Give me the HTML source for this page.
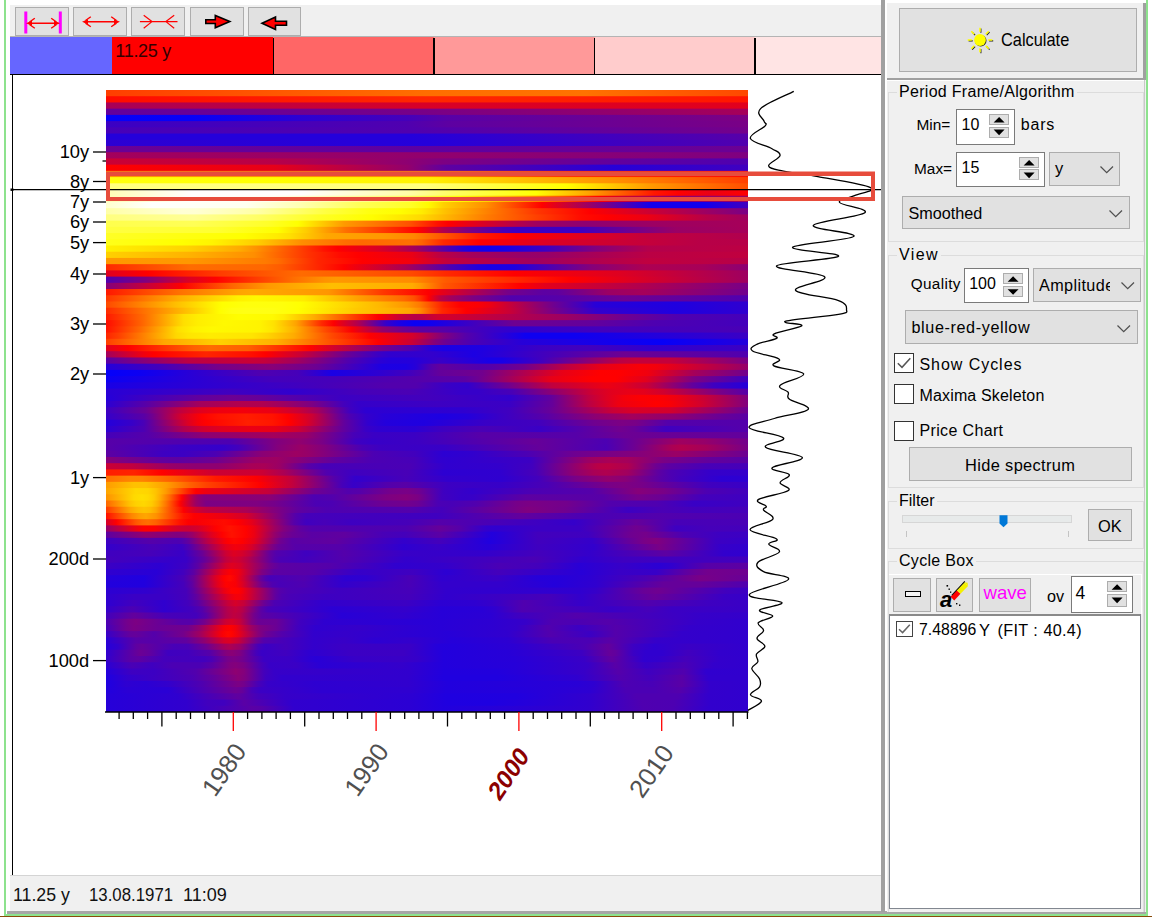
<!DOCTYPE html>
<html><head><meta charset="utf-8"><title>Spectrum</title>
<style>
html,body{margin:0;padding:0}
body{width:1152px;height:917px;position:relative;overflow:hidden;background:#fff;font-family:"Liberation Sans",sans-serif;font-size:16px;color:#000}
.a{position:absolute}
.btn{position:absolute;background:#e1e1e1;border:1px solid #adadad;box-sizing:border-box}
.inp{position:absolute;background:#fff;border:1px solid #7a7a7a;box-sizing:border-box}
.sp{position:absolute;background:#e1e1e1;border:1px solid #adadad;box-sizing:border-box}
.grp{position:absolute;border:1px solid #dcdcdc;box-sizing:border-box}
.t{position:absolute;white-space:nowrap;line-height:20px;height:20px}
.cb{position:absolute;width:20px;height:20px;background:#fff;border:1.5px solid #333;box-sizing:border-box}
</style></head><body>
<!-- window frame -->
<div class="a" style="left:4px;top:0;width:2.4px;height:915px;background:#8de28d"></div>
<div class="a" style="left:7px;top:911px;width:1139px;height:3px;background:#a6a6a6"></div>
<div class="a" style="left:4px;top:914px;width:1144px;height:1.8px;background:#8de28d"></div>
<div class="a" style="left:0;top:915.7px;width:1152px;height:2px;background:#8a4a0a"></div>
<div class="a" style="left:1145.6px;top:0;width:2.4px;height:915px;background:#8de28d"></div>

<!-- toolbar -->
<div class="a" style="left:10px;top:4.5px;width:871px;height:32px;background:#f0f0f0"></div>
<div class="btn" style="left:14.5px;top:6.5px;width:54px;height:29px">
<svg class="a" style="left:-1px;top:-1px" width="54" height="29" viewBox="14.5 6.5 54 29"><rect x="23.8" y="11" width="3" height="22" fill="#f0f"/><rect x="58.3" y="11" width="3" height="22" fill="#f0f"/><path d="M28 22.7H58M34.3 17.7L29 21.5M34.3 27.7L29 24M50.7 17.7L56 21.5M50.7 27.7L56 24" stroke="#f00" stroke-width="1.4" fill="none"/><path d="M25.5 22.7L31.5 20.2V25.2ZM59.5 22.7L53.5 20.2V25.2Z" fill="#f00"/></svg></div>
<div class="btn" style="left:73px;top:6.5px;width:54px;height:29px">
<svg class="a" style="left:-1px;top:-1px" width="54" height="29" viewBox="73 6.5 54 29"><path d="M84 21.3H118M90.8 16.3L85.5 20M90.8 26.3L85.5 22.6M111.2 16.3L116.5 20M111.2 26.3L116.5 22.6" stroke="#f00" stroke-width="1.4" fill="none"/><path d="M82 21.3L88 18.8V23.8ZM120 21.3L114 18.8V23.8Z" fill="#f00"/></svg></div>
<div class="btn" style="left:131.3px;top:6.5px;width:54px;height:29px">
<svg class="a" style="left:-1px;top:-1px" width="54" height="29" viewBox="131.3 6.5 54 29"><path d="M140.2 21.1H177.8M144 14.8L152.3 21.1L144 27.7M174.5 14.8L166.2 21.1L174.5 27.7" stroke="#f00" stroke-width="1.2" fill="none"/></svg></div>
<div class="btn" style="left:189.7px;top:6.5px;width:54px;height:29px">
<svg class="a" style="left:-1px;top:-1px" width="54" height="29" viewBox="189.7 6.5 54 29"><path d="M205.5 19.2H215V15L229.5 21.1L215 27.3V23H205.5Z" fill="#f00" stroke="#000" stroke-width="1.6" stroke-linejoin="miter"/></svg></div>
<div class="btn" style="left:248px;top:6.5px;width:52.5px;height:29px">
<svg class="a" style="left:-1px;top:-1px" width="54" height="29" viewBox="248 6.5 54 29"><path d="M286.5 20.8H275.5V16.5L262 22.7L275.5 29V24.7H286.5Z" fill="#f00" stroke="#000" stroke-width="1.6" stroke-linejoin="miter"/></svg></div>

<!-- colour bar -->
<div class="a" style="left:10px;top:36.3px;width:872px;height:1px;background:#b4b4b4"></div>
<div class="a" style="left:10px;top:37px;width:102px;height:37.3px;background:#6666ff"></div>
<div class="a" style="left:112px;top:37px;width:161px;height:37.3px;background:#ff0000"></div>
<div class="a" style="left:273px;top:37px;width:161px;height:37.3px;background:#ff6666"></div>
<div class="a" style="left:434px;top:37px;width:160.5px;height:37.3px;background:#ff9999"></div>
<div class="a" style="left:594.5px;top:37px;width:160.5px;height:37.3px;background:#ffcccc"></div>
<div class="a" style="left:755px;top:37px;width:127px;height:37.3px;background:#ffe4e4"></div>
<div class="a" style="left:272.6px;top:38px;width:1.2px;height:37px;background:#000"></div>
<div class="a" style="left:433.4px;top:38px;width:1.2px;height:37px;background:#000"></div>
<div class="a" style="left:593.9px;top:38px;width:1.2px;height:37px;background:#000"></div>
<div class="a" style="left:754.4px;top:38px;width:1.2px;height:37px;background:#000"></div>
<div class="a" style="left:10px;top:73.9px;width:872px;height:1.4px;background:#000"></div>
<div class="t" style="left:115.3px;top:40.5px;font-size:18px;letter-spacing:-0.3px;color:#300">11.25 y</div>
<!-- chart left border -->
<div class="a" style="left:11.5px;top:75px;width:1.1px;height:800px;background:#000"></div>

<svg width="1152" height="917" viewBox="0 0 1152 917" style="position:absolute;left:0;top:0" font-family="Liberation Sans, sans-serif">
<g transform="translate(106,90)"><defs><linearGradient id="r0"><stop offset="0" stop-color="#ff3e00"/><stop offset="0.495" stop-color="#ff6d00"/><stop offset="0.745" stop-color="#ff7200"/><stop offset="1" stop-color="#ff4800"/></linearGradient><linearGradient id="r1"><stop offset="0" stop-color="#ff0b00"/><stop offset="0.498" stop-color="#ff2600"/><stop offset="1" stop-color="#ff1500"/></linearGradient><linearGradient id="r2"><stop offset="0" stop-color="#a70058"/><stop offset="0.498" stop-color="#d80027"/><stop offset="1" stop-color="#e2001d"/></linearGradient><linearGradient id="r3"><stop offset="0" stop-color="#63009c"/><stop offset="0.474" stop-color="#760089"/><stop offset="1" stop-color="#a60059"/></linearGradient><linearGradient id="r4"><stop offset="0" stop-color="#0600f9"/><stop offset="0.134" stop-color="#0700f8"/><stop offset="0.302" stop-color="#2c00d3"/><stop offset="0.47" stop-color="#4500ba"/><stop offset="0.53" stop-color="#5800a7"/><stop offset="1" stop-color="#7c0083"/></linearGradient><linearGradient id="r5"><stop offset="0" stop-color="#3b00c4"/><stop offset="0.467" stop-color="#4f00b0"/><stop offset="0.533" stop-color="#5d00a2"/><stop offset="1" stop-color="#790086"/></linearGradient><linearGradient id="r6"><stop offset="0" stop-color="#4600b9"/><stop offset="0.474" stop-color="#5000af"/><stop offset="1" stop-color="#74008b"/></linearGradient><linearGradient id="r7"><stop offset="0" stop-color="#2400db"/><stop offset="0.477" stop-color="#2400db"/><stop offset="1" stop-color="#5600a9"/></linearGradient><linearGradient id="r8"><stop offset="0" stop-color="#2c00d3"/><stop offset="0.502" stop-color="#2400db"/><stop offset="1" stop-color="#5000af"/></linearGradient><linearGradient id="r9"><stop offset="0" stop-color="#6b0094"/><stop offset="0.474" stop-color="#5c00a3"/><stop offset="1" stop-color="#6b0094"/></linearGradient><linearGradient id="r10"><stop offset="0" stop-color="#a4005b"/><stop offset="1" stop-color="#7f0080"/></linearGradient><linearGradient id="r11"><stop offset="0" stop-color="#ca0035"/><stop offset="0.259" stop-color="#b70048"/><stop offset="0.467" stop-color="#8e0071"/><stop offset="0.526" stop-color="#7c0083"/><stop offset="1" stop-color="#4e00b1"/></linearGradient><linearGradient id="r12"><stop offset="0" stop-color="#ff0000"/><stop offset="0.262" stop-color="#e60019"/><stop offset="0.47" stop-color="#93006c"/><stop offset="0.53" stop-color="#5e00a1"/><stop offset="0.791" stop-color="#2700d8"/><stop offset="1" stop-color="#4000bf"/></linearGradient><linearGradient id="r13"><stop offset="0" stop-color="#ff9900"/><stop offset="0.495" stop-color="#ff8c00"/><stop offset="0.72" stop-color="#ff3400"/><stop offset="1" stop-color="#ff0e00"/></linearGradient><linearGradient id="r14"><stop offset="0" stop-color="#ffff0d"/><stop offset="0.249" stop-color="#ffff00"/><stop offset="0.502" stop-color="#fff100"/><stop offset="0.801" stop-color="#ff8d00"/><stop offset="1" stop-color="#ff3f00"/></linearGradient><linearGradient id="r15"><stop offset="0" stop-color="#ffff80"/><stop offset="0.495" stop-color="#ffff7f"/><stop offset="0.717" stop-color="#ffff00"/><stop offset="0.847" stop-color="#ff9a00"/><stop offset="1" stop-color="#ff4e00"/></linearGradient><linearGradient id="r16"><stop offset="0" stop-color="#ffffb5"/><stop offset="0.134" stop-color="#fffffe"/><stop offset="0.305" stop-color="#fffffd"/><stop offset="0.474" stop-color="#ffffa6"/><stop offset="0.53" stop-color="#ffff6a"/><stop offset="0.67" stop-color="#ffff02"/><stop offset="0.754" stop-color="#ffa000"/><stop offset="0.854" stop-color="#ff1700"/><stop offset="0.891" stop-color="#ff0100"/><stop offset="0.938" stop-color="#eb0014"/><stop offset="1" stop-color="#fe0001"/></linearGradient><linearGradient id="r17"><stop offset="0" stop-color="#ffffb5"/><stop offset="0.131" stop-color="#fffffd"/><stop offset="0.259" stop-color="#fffff1"/><stop offset="0.47" stop-color="#ffff60"/><stop offset="0.551" stop-color="#ffff01"/><stop offset="0.648" stop-color="#ff9e00"/><stop offset="0.717" stop-color="#ff4c00"/><stop offset="0.769" stop-color="#ff0000"/><stop offset="0.81" stop-color="#ca0035"/><stop offset="0.888" stop-color="#8d0072"/><stop offset="1" stop-color="#9f0060"/></linearGradient><linearGradient id="r18"><stop offset="0" stop-color="#ffffcf"/><stop offset="0.0717" stop-color="#fffffd"/><stop offset="0.218" stop-color="#ffffef"/><stop offset="0.302" stop-color="#ffffb3"/><stop offset="0.393" stop-color="#ffff59"/><stop offset="0.474" stop-color="#ffff27"/><stop offset="0.502" stop-color="#fffb00"/><stop offset="0.526" stop-color="#ffd000"/><stop offset="0.592" stop-color="#ff8f00"/><stop offset="0.679" stop-color="#ff0100"/><stop offset="0.85" stop-color="#1300ec"/><stop offset="0.931" stop-color="#1100ee"/><stop offset="1" stop-color="#4000bf"/></linearGradient><linearGradient id="r19"><stop offset="0" stop-color="#ffffa7"/><stop offset="0.118" stop-color="#ffffd4"/><stop offset="0.14" stop-color="#ffffd3"/><stop offset="0.234" stop-color="#ffffa7"/><stop offset="0.343" stop-color="#ffff40"/><stop offset="0.411" stop-color="#ffff0f"/><stop offset="0.458" stop-color="#fffe00"/><stop offset="0.492" stop-color="#ffec00"/><stop offset="0.53" stop-color="#ffbf00"/><stop offset="0.673" stop-color="#ff3500"/><stop offset="0.754" stop-color="#ff0000"/><stop offset="1" stop-color="#790086"/></linearGradient><linearGradient id="r20"><stop offset="0" stop-color="#ffff80"/><stop offset="0.137" stop-color="#ffff95"/><stop offset="0.237" stop-color="#ffff66"/><stop offset="0.33" stop-color="#ffff25"/><stop offset="0.414" stop-color="#fffe00"/><stop offset="0.489" stop-color="#ffda00"/><stop offset="0.592" stop-color="#ff7c00"/><stop offset="0.741" stop-color="#ff0b00"/><stop offset="0.779" stop-color="#ff0000"/><stop offset="0.841" stop-color="#ed0012"/><stop offset="0.935" stop-color="#b70048"/><stop offset="1" stop-color="#9f0060"/></linearGradient><linearGradient id="r21"><stop offset="0" stop-color="#ffff4d"/><stop offset="0.137" stop-color="#ffff56"/><stop offset="0.252" stop-color="#ffff29"/><stop offset="0.299" stop-color="#ffff00"/><stop offset="0.371" stop-color="#ff9a00"/><stop offset="0.474" stop-color="#ff5000"/><stop offset="0.517" stop-color="#ff1000"/><stop offset="0.533" stop-color="#ff0000"/><stop offset="0.67" stop-color="#a1005e"/><stop offset="0.748" stop-color="#8d0072"/><stop offset="0.854" stop-color="#9d0062"/><stop offset="1" stop-color="#a60059"/></linearGradient><linearGradient id="r22"><stop offset="0" stop-color="#ffff3f"/><stop offset="0.171" stop-color="#ffff32"/><stop offset="0.268" stop-color="#fffe00"/><stop offset="0.312" stop-color="#ffcc00"/><stop offset="0.374" stop-color="#ff6f00"/><stop offset="0.486" stop-color="#ff0200"/><stop offset="0.498" stop-color="#ed0012"/><stop offset="0.526" stop-color="#b0004f"/><stop offset="0.561" stop-color="#7f0080"/><stop offset="0.62" stop-color="#4600b9"/><stop offset="0.642" stop-color="#3b00c4"/><stop offset="0.735" stop-color="#3c00c3"/><stop offset="0.888" stop-color="#9a0065"/><stop offset="1" stop-color="#a60059"/></linearGradient><linearGradient id="r23"><stop offset="0" stop-color="#ffff26"/><stop offset="0.215" stop-color="#ffff00"/><stop offset="0.265" stop-color="#ffec00"/><stop offset="0.287" stop-color="#ffdf00"/><stop offset="0.343" stop-color="#ffa700"/><stop offset="0.433" stop-color="#ff9800"/><stop offset="0.48" stop-color="#ff8600"/><stop offset="0.583" stop-color="#ff1a00"/><stop offset="0.639" stop-color="#ff0000"/><stop offset="0.844" stop-color="#c2003d"/><stop offset="1" stop-color="#b0004f"/></linearGradient><linearGradient id="r24"><stop offset="0" stop-color="#ffff19"/><stop offset="0.115" stop-color="#ffff00"/><stop offset="0.165" stop-color="#fff400"/><stop offset="0.237" stop-color="#ffcc00"/><stop offset="0.305" stop-color="#ff8d00"/><stop offset="0.374" stop-color="#ff6d00"/><stop offset="0.399" stop-color="#ff6800"/><stop offset="0.477" stop-color="#ff7100"/><stop offset="0.492" stop-color="#ff6300"/><stop offset="0.526" stop-color="#ff2900"/><stop offset="0.583" stop-color="#ff0000"/><stop offset="0.685" stop-color="#dc0023"/><stop offset="0.925" stop-color="#b80047"/><stop offset="1" stop-color="#b70048"/></linearGradient><linearGradient id="r25"><stop offset="0" stop-color="#fff100"/><stop offset="0.128" stop-color="#ffd300"/><stop offset="0.209" stop-color="#ffaa00"/><stop offset="0.234" stop-color="#ff9200"/><stop offset="0.34" stop-color="#ff1200"/><stop offset="0.361" stop-color="#ff0000"/><stop offset="0.43" stop-color="#d5002a"/><stop offset="0.464" stop-color="#b60049"/><stop offset="0.486" stop-color="#9b0064"/><stop offset="0.558" stop-color="#2500da"/><stop offset="0.573" stop-color="#1800e7"/><stop offset="0.598" stop-color="#1200ed"/><stop offset="0.62" stop-color="#1700e8"/><stop offset="0.685" stop-color="#3e00c1"/><stop offset="0.763" stop-color="#82007d"/><stop offset="0.844" stop-color="#b4004b"/><stop offset="1" stop-color="#bc0043"/></linearGradient><linearGradient id="r26"><stop offset="0" stop-color="#ffd000"/><stop offset="0.128" stop-color="#ffb300"/><stop offset="0.231" stop-color="#ff8e00"/><stop offset="0.315" stop-color="#ff3200"/><stop offset="0.364" stop-color="#ff0b00"/><stop offset="0.393" stop-color="#ff0000"/><stop offset="0.477" stop-color="#ea0015"/><stop offset="0.523" stop-color="#b90046"/><stop offset="0.567" stop-color="#a5005a"/><stop offset="0.654" stop-color="#960069"/><stop offset="0.688" stop-color="#970068"/><stop offset="0.847" stop-color="#bb0044"/><stop offset="1" stop-color="#c0003f"/></linearGradient><linearGradient id="r27"><stop offset="0" stop-color="#ff9900"/><stop offset="0.131" stop-color="#ff9800"/><stop offset="0.249" stop-color="#ff7a00"/><stop offset="0.268" stop-color="#ff6d00"/><stop offset="0.33" stop-color="#ff2500"/><stop offset="0.399" stop-color="#ff0000"/><stop offset="0.474" stop-color="#f3000c"/><stop offset="0.53" stop-color="#c2003d"/><stop offset="0.667" stop-color="#9f0060"/><stop offset="0.847" stop-color="#c0003f"/><stop offset="1" stop-color="#b70048"/></linearGradient><linearGradient id="r28"><stop offset="0" stop-color="#ff2900"/><stop offset="0.131" stop-color="#ff6c00"/><stop offset="0.246" stop-color="#ff6700"/><stop offset="0.271" stop-color="#ff5c00"/><stop offset="0.371" stop-color="#ff0100"/><stop offset="0.467" stop-color="#a80057"/><stop offset="0.536" stop-color="#4c00b3"/><stop offset="0.579" stop-color="#2100de"/><stop offset="0.598" stop-color="#1900e6"/><stop offset="0.636" stop-color="#1e00e1"/><stop offset="0.757" stop-color="#860079"/><stop offset="0.841" stop-color="#ad0052"/><stop offset="0.928" stop-color="#a70058"/><stop offset="1" stop-color="#8c0073"/></linearGradient><linearGradient id="r29"><stop offset="0" stop-color="#df0020"/><stop offset="0.0654" stop-color="#ff0000"/><stop offset="0.178" stop-color="#ff3c00"/><stop offset="0.305" stop-color="#ff6b00"/><stop offset="0.477" stop-color="#ff4800"/><stop offset="0.53" stop-color="#ff2800"/><stop offset="0.636" stop-color="#ff0000"/><stop offset="0.801" stop-color="#de0021"/><stop offset="1" stop-color="#9e0061"/></linearGradient><linearGradient id="r30"><stop offset="0" stop-color="#5100ae"/><stop offset="0.0623" stop-color="#80007f"/><stop offset="0.131" stop-color="#dc0023"/><stop offset="0.171" stop-color="#ff0100"/><stop offset="0.293" stop-color="#ff6e00"/><stop offset="0.34" stop-color="#ff9200"/><stop offset="0.358" stop-color="#ff9800"/><stop offset="0.477" stop-color="#ff8c00"/><stop offset="0.53" stop-color="#ff5a00"/><stop offset="0.723" stop-color="#ff0000"/><stop offset="1" stop-color="#9f0060"/></linearGradient><linearGradient id="r31"><stop offset="0" stop-color="#85007a"/><stop offset="0.118" stop-color="#fe0001"/><stop offset="0.196" stop-color="#ff6500"/><stop offset="0.252" stop-color="#ff9900"/><stop offset="0.352" stop-color="#ffbe00"/><stop offset="0.477" stop-color="#ffab00"/><stop offset="0.489" stop-color="#ff9c00"/><stop offset="0.526" stop-color="#ff5700"/><stop offset="0.645" stop-color="#fe0001"/><stop offset="0.685" stop-color="#e3001c"/><stop offset="1" stop-color="#780087"/></linearGradient><linearGradient id="r32"><stop offset="0" stop-color="#ff1800"/><stop offset="0.115" stop-color="#ff7100"/><stop offset="0.206" stop-color="#ffa400"/><stop offset="0.227" stop-color="#ffa900"/><stop offset="0.346" stop-color="#ff9600"/><stop offset="0.433" stop-color="#ff3600"/><stop offset="0.502" stop-color="#fe0001"/><stop offset="0.626" stop-color="#760089"/><stop offset="0.682" stop-color="#5c00a3"/><stop offset="0.704" stop-color="#5f00a0"/><stop offset="0.782" stop-color="#9b0064"/><stop offset="0.838" stop-color="#a5005a"/><stop offset="1" stop-color="#71008e"/></linearGradient><linearGradient id="r33"><stop offset="0" stop-color="#ff3700"/><stop offset="0.115" stop-color="#ffaf00"/><stop offset="0.206" stop-color="#fff100"/><stop offset="0.234" stop-color="#fff800"/><stop offset="0.308" stop-color="#ffec00"/><stop offset="0.393" stop-color="#ffa000"/><stop offset="0.464" stop-color="#ff6800"/><stop offset="0.48" stop-color="#ff5100"/><stop offset="0.489" stop-color="#ff3500"/><stop offset="0.502" stop-color="#ff0300"/><stop offset="0.505" stop-color="#f5000a"/><stop offset="0.52" stop-color="#be0041"/><stop offset="0.536" stop-color="#a2005d"/><stop offset="0.573" stop-color="#7b0084"/><stop offset="0.632" stop-color="#5100ae"/><stop offset="0.713" stop-color="#5600a9"/><stop offset="0.807" stop-color="#6e0091"/><stop offset="1" stop-color="#4f00b0"/></linearGradient><linearGradient id="r34"><stop offset="0" stop-color="#ff4900"/><stop offset="0.109" stop-color="#ffbf00"/><stop offset="0.181" stop-color="#ffff00"/><stop offset="0.218" stop-color="#ffff0d"/><stop offset="0.274" stop-color="#ffff0c"/><stop offset="0.302" stop-color="#ffff01"/><stop offset="0.427" stop-color="#ffb700"/><stop offset="0.47" stop-color="#ff9500"/><stop offset="0.489" stop-color="#ff7900"/><stop offset="0.526" stop-color="#ff1d00"/><stop offset="0.551" stop-color="#ff0100"/><stop offset="0.579" stop-color="#fb0004"/><stop offset="0.598" stop-color="#ed0012"/><stop offset="0.698" stop-color="#6e0091"/><stop offset="0.763" stop-color="#2700d8"/><stop offset="0.888" stop-color="#1f00e0"/><stop offset="1" stop-color="#2f00d0"/></linearGradient><linearGradient id="r35"><stop offset="0" stop-color="#ff2b00"/><stop offset="0.178" stop-color="#fffe00"/><stop offset="0.196" stop-color="#ffff10"/><stop offset="0.218" stop-color="#ffff14"/><stop offset="0.259" stop-color="#ffff13"/><stop offset="0.299" stop-color="#ffff01"/><stop offset="0.389" stop-color="#ffc900"/><stop offset="0.474" stop-color="#ffa700"/><stop offset="0.489" stop-color="#ff8c00"/><stop offset="0.523" stop-color="#ff2900"/><stop offset="0.561" stop-color="#ff0000"/><stop offset="0.629" stop-color="#c90036"/><stop offset="0.698" stop-color="#75008a"/><stop offset="0.763" stop-color="#3200cd"/><stop offset="0.888" stop-color="#1f00e0"/><stop offset="1" stop-color="#2f00d0"/></linearGradient><linearGradient id="r36"><stop offset="0" stop-color="#ff1a00"/><stop offset="0.0592" stop-color="#ff6b00"/><stop offset="0.121" stop-color="#ffdf00"/><stop offset="0.143" stop-color="#ffed00"/><stop offset="0.206" stop-color="#fffe00"/><stop offset="0.259" stop-color="#fffa00"/><stop offset="0.277" stop-color="#ffed00"/><stop offset="0.324" stop-color="#ffac00"/><stop offset="0.393" stop-color="#ff3100"/><stop offset="0.424" stop-color="#fd0002"/><stop offset="0.458" stop-color="#c90036"/><stop offset="0.48" stop-color="#b70048"/><stop offset="0.492" stop-color="#b90046"/><stop offset="0.517" stop-color="#d0002f"/><stop offset="0.533" stop-color="#d1002e"/><stop offset="0.717" stop-color="#9c0063"/><stop offset="0.807" stop-color="#6f0090"/><stop offset="0.888" stop-color="#5000af"/><stop offset="1" stop-color="#4400bb"/></linearGradient><linearGradient id="r37"><stop offset="0" stop-color="#ff0c00"/><stop offset="0.0561" stop-color="#ff6400"/><stop offset="0.121" stop-color="#ffdf00"/><stop offset="0.143" stop-color="#ffee00"/><stop offset="0.184" stop-color="#fff900"/><stop offset="0.24" stop-color="#fff300"/><stop offset="0.262" stop-color="#ffe100"/><stop offset="0.296" stop-color="#ffa300"/><stop offset="0.336" stop-color="#ff2900"/><stop offset="0.355" stop-color="#fd0002"/><stop offset="0.393" stop-color="#ae0051"/><stop offset="0.436" stop-color="#3500ca"/><stop offset="0.455" stop-color="#1c00e3"/><stop offset="0.48" stop-color="#0a00f5"/><stop offset="0.508" stop-color="#1100ee"/><stop offset="0.636" stop-color="#6e0091"/><stop offset="0.757" stop-color="#63009c"/><stop offset="0.854" stop-color="#4e00b1"/><stop offset="1" stop-color="#4300bc"/></linearGradient><linearGradient id="r38"><stop offset="0" stop-color="#ff1100"/><stop offset="0.053" stop-color="#ff6a00"/><stop offset="0.112" stop-color="#ffdf00"/><stop offset="0.137" stop-color="#fff200"/><stop offset="0.165" stop-color="#fff900"/><stop offset="0.24" stop-color="#fff300"/><stop offset="0.259" stop-color="#ffe600"/><stop offset="0.293" stop-color="#ffb300"/><stop offset="0.34" stop-color="#ff4d00"/><stop offset="0.383" stop-color="#fb0004"/><stop offset="0.43" stop-color="#94006b"/><stop offset="0.464" stop-color="#6e0091"/><stop offset="0.489" stop-color="#5c00a3"/><stop offset="0.523" stop-color="#5700a8"/><stop offset="0.614" stop-color="#3500ca"/><stop offset="0.642" stop-color="#3100ce"/><stop offset="0.773" stop-color="#4400bb"/><stop offset="1" stop-color="#4900b6"/></linearGradient><linearGradient id="r39"><stop offset="0" stop-color="#ff2500"/><stop offset="0.0187" stop-color="#ff3e00"/><stop offset="0.109" stop-color="#ffd700"/><stop offset="0.128" stop-color="#ffe500"/><stop offset="0.162" stop-color="#ffec00"/><stop offset="0.227" stop-color="#ffe500"/><stop offset="0.252" stop-color="#ffd400"/><stop offset="0.293" stop-color="#ffab00"/><stop offset="0.352" stop-color="#ff4800"/><stop offset="0.411" stop-color="#fe0001"/><stop offset="0.477" stop-color="#d4002b"/><stop offset="0.492" stop-color="#bf0040"/><stop offset="0.526" stop-color="#80007f"/><stop offset="0.561" stop-color="#5500aa"/><stop offset="0.654" stop-color="#0e00f1"/><stop offset="0.729" stop-color="#0e00f1"/><stop offset="1" stop-color="#3a00c5"/></linearGradient><linearGradient id="r40"><stop offset="0" stop-color="#ff3f00"/><stop offset="0.0903" stop-color="#ffa600"/><stop offset="0.178" stop-color="#ffd100"/><stop offset="0.265" stop-color="#ffb100"/><stop offset="0.424" stop-color="#ff0000"/><stop offset="0.477" stop-color="#c90036"/><stop offset="0.514" stop-color="#81007e"/><stop offset="0.53" stop-color="#6b0094"/><stop offset="0.57" stop-color="#4c00b3"/><stop offset="0.648" stop-color="#2700d8"/><stop offset="0.866" stop-color="#0700f8"/><stop offset="1" stop-color="#2300dc"/></linearGradient><linearGradient id="r41"><stop offset="0" stop-color="#e1001e"/><stop offset="0.0343" stop-color="#ff0000"/><stop offset="0.137" stop-color="#ff6000"/><stop offset="0.162" stop-color="#ff6c00"/><stop offset="0.221" stop-color="#ff6000"/><stop offset="0.318" stop-color="#ff0300"/><stop offset="0.43" stop-color="#760089"/><stop offset="0.474" stop-color="#5000af"/><stop offset="0.508" stop-color="#2400db"/><stop offset="0.526" stop-color="#1b00e4"/><stop offset="0.586" stop-color="#1f00e0"/><stop offset="0.673" stop-color="#3a00c5"/><stop offset="0.748" stop-color="#4200bd"/><stop offset="0.85" stop-color="#3000cf"/><stop offset="1" stop-color="#3b00c4"/></linearGradient><linearGradient id="r42"><stop offset="0" stop-color="#a2005d"/><stop offset="0.0592" stop-color="#f1000e"/><stop offset="0.0748" stop-color="#ff0000"/><stop offset="0.156" stop-color="#ff2400"/><stop offset="0.227" stop-color="#ff0e00"/><stop offset="0.249" stop-color="#ff0000"/><stop offset="0.305" stop-color="#c70038"/><stop offset="0.374" stop-color="#6c0093"/><stop offset="0.424" stop-color="#3b00c4"/><stop offset="0.442" stop-color="#3000cf"/><stop offset="0.508" stop-color="#3300cc"/><stop offset="0.573" stop-color="#1c00e3"/><stop offset="0.807" stop-color="#6e0091"/><stop offset="1" stop-color="#4f00b0"/></linearGradient><linearGradient id="r43"><stop offset="0" stop-color="#5900a6"/><stop offset="0.128" stop-color="#bc0043"/><stop offset="0.224" stop-color="#c90036"/><stop offset="0.246" stop-color="#c4003b"/><stop offset="0.296" stop-color="#a2005d"/><stop offset="0.377" stop-color="#5100ae"/><stop offset="0.427" stop-color="#2b00d4"/><stop offset="0.445" stop-color="#2400db"/><stop offset="0.477" stop-color="#2500da"/><stop offset="0.52" stop-color="#3800c7"/><stop offset="0.598" stop-color="#1800e7"/><stop offset="0.617" stop-color="#1800e7"/><stop offset="0.679" stop-color="#4100be"/><stop offset="0.801" stop-color="#bb0044"/><stop offset="0.826" stop-color="#c4003b"/><stop offset="0.879" stop-color="#c4003b"/><stop offset="1" stop-color="#7a0085"/></linearGradient><linearGradient id="r44"><stop offset="0" stop-color="#2500da"/><stop offset="0.0841" stop-color="#4300bc"/><stop offset="0.174" stop-color="#760089"/><stop offset="0.259" stop-color="#880077"/><stop offset="0.327" stop-color="#6d0092"/><stop offset="0.43" stop-color="#1d00e2"/><stop offset="0.467" stop-color="#1c00e3"/><stop offset="0.483" stop-color="#2700d8"/><stop offset="0.508" stop-color="#5500aa"/><stop offset="0.52" stop-color="#62009d"/><stop offset="0.579" stop-color="#5200ad"/><stop offset="0.601" stop-color="#5600a9"/><stop offset="0.651" stop-color="#72008d"/><stop offset="0.717" stop-color="#be0041"/><stop offset="0.769" stop-color="#e70018"/><stop offset="0.832" stop-color="#f80007"/><stop offset="0.857" stop-color="#f3000c"/><stop offset="1" stop-color="#960069"/></linearGradient><linearGradient id="r45"><stop offset="0" stop-color="#0400fb"/><stop offset="0.053" stop-color="#0d00f2"/><stop offset="0.24" stop-color="#4f00b0"/><stop offset="0.299" stop-color="#4600b9"/><stop offset="0.352" stop-color="#1a00e5"/><stop offset="0.424" stop-color="#2d00d2"/><stop offset="0.474" stop-color="#4200bd"/><stop offset="0.52" stop-color="#64009b"/><stop offset="0.586" stop-color="#71008e"/><stop offset="0.71" stop-color="#e80017"/><stop offset="0.769" stop-color="#ff0000"/><stop offset="0.801" stop-color="#fe0001"/><stop offset="0.844" stop-color="#f0000f"/><stop offset="0.916" stop-color="#a5005a"/><stop offset="1" stop-color="#71008e"/></linearGradient><linearGradient id="r46"><stop offset="0" stop-color="#0c00f3"/><stop offset="0.259" stop-color="#4400bb"/><stop offset="0.355" stop-color="#4500ba"/><stop offset="0.558" stop-color="#5c00a3"/><stop offset="0.579" stop-color="#6c0093"/><stop offset="0.692" stop-color="#e70018"/><stop offset="0.757" stop-color="#ff0000"/><stop offset="0.794" stop-color="#ff0000"/><stop offset="0.841" stop-color="#e3001c"/><stop offset="0.916" stop-color="#7d0082"/><stop offset="1" stop-color="#3f00c0"/></linearGradient><linearGradient id="r47"><stop offset="0" stop-color="#1900e6"/><stop offset="0.436" stop-color="#5200ad"/><stop offset="0.483" stop-color="#5200ad"/><stop offset="0.53" stop-color="#3900c6"/><stop offset="0.564" stop-color="#3300cc"/><stop offset="0.626" stop-color="#70008f"/><stop offset="0.695" stop-color="#c1003e"/><stop offset="0.779" stop-color="#ed0012"/><stop offset="0.804" stop-color="#e3001c"/><stop offset="0.844" stop-color="#c5003a"/><stop offset="0.913" stop-color="#63009c"/><stop offset="0.947" stop-color="#3e00c1"/><stop offset="1" stop-color="#2500da"/></linearGradient><linearGradient id="r48"><stop offset="0" stop-color="#2900d6"/><stop offset="0.19" stop-color="#4000bf"/><stop offset="0.287" stop-color="#3100ce"/><stop offset="0.396" stop-color="#4600b9"/><stop offset="0.47" stop-color="#4b00b4"/><stop offset="0.551" stop-color="#3600c9"/><stop offset="0.579" stop-color="#3600c9"/><stop offset="0.632" stop-color="#4800b7"/><stop offset="0.76" stop-color="#d0002f"/><stop offset="0.788" stop-color="#e2001d"/><stop offset="0.816" stop-color="#e80017"/><stop offset="0.838" stop-color="#e3001c"/><stop offset="0.869" stop-color="#cf0030"/><stop offset="0.96" stop-color="#75008a"/><stop offset="1" stop-color="#5600a9"/></linearGradient><linearGradient id="r49"><stop offset="0" stop-color="#2500da"/><stop offset="0.146" stop-color="#62009d"/><stop offset="0.196" stop-color="#6c0093"/><stop offset="0.237" stop-color="#670098"/><stop offset="0.368" stop-color="#3c00c3"/><stop offset="0.498" stop-color="#4300bc"/><stop offset="0.629" stop-color="#3300cc"/><stop offset="0.692" stop-color="#60009f"/><stop offset="0.751" stop-color="#bd0042"/><stop offset="0.779" stop-color="#dc0023"/><stop offset="0.807" stop-color="#f4000b"/><stop offset="0.832" stop-color="#fc0003"/><stop offset="0.866" stop-color="#fb0004"/><stop offset="0.888" stop-color="#ef0010"/><stop offset="0.931" stop-color="#cb0034"/><stop offset="1" stop-color="#80007f"/></linearGradient><linearGradient id="r50"><stop offset="0" stop-color="#2c00d3"/><stop offset="0.0623" stop-color="#5800a7"/><stop offset="0.146" stop-color="#a3005c"/><stop offset="0.206" stop-color="#b1004e"/><stop offset="0.243" stop-color="#af0050"/><stop offset="0.277" stop-color="#9c0063"/><stop offset="0.321" stop-color="#7c0083"/><stop offset="0.371" stop-color="#4300bc"/><stop offset="0.393" stop-color="#3500ca"/><stop offset="0.514" stop-color="#3d00c2"/><stop offset="0.629" stop-color="#3a00c5"/><stop offset="0.695" stop-color="#65009a"/><stop offset="0.751" stop-color="#b90046"/><stop offset="0.798" stop-color="#ee0011"/><stop offset="0.857" stop-color="#ff0000"/><stop offset="0.879" stop-color="#f90006"/><stop offset="0.925" stop-color="#d4002b"/><stop offset="1" stop-color="#81007e"/></linearGradient><linearGradient id="r51"><stop offset="0" stop-color="#3c00c3"/><stop offset="0.0623" stop-color="#6a0095"/><stop offset="0.112" stop-color="#bc0043"/><stop offset="0.143" stop-color="#de0021"/><stop offset="0.171" stop-color="#ee0011"/><stop offset="0.212" stop-color="#f3000c"/><stop offset="0.259" stop-color="#ea0015"/><stop offset="0.302" stop-color="#c60039"/><stop offset="0.33" stop-color="#a2005d"/><stop offset="0.38" stop-color="#4000bf"/><stop offset="0.405" stop-color="#2d00d2"/><stop offset="0.555" stop-color="#2f00d0"/><stop offset="0.629" stop-color="#4000bf"/><stop offset="0.692" stop-color="#660099"/><stop offset="0.788" stop-color="#c80037"/><stop offset="0.822" stop-color="#d90026"/><stop offset="0.879" stop-color="#d2002d"/><stop offset="1" stop-color="#6b0094"/></linearGradient><linearGradient id="r52"><stop offset="0" stop-color="#3600c9"/><stop offset="0.0592" stop-color="#5900a6"/><stop offset="0.0717" stop-color="#6e0091"/><stop offset="0.118" stop-color="#d5002a"/><stop offset="0.15" stop-color="#ff0200"/><stop offset="0.174" stop-color="#ff1100"/><stop offset="0.218" stop-color="#ff1d00"/><stop offset="0.259" stop-color="#ff1200"/><stop offset="0.283" stop-color="#ff0000"/><stop offset="0.321" stop-color="#cc0033"/><stop offset="0.364" stop-color="#680097"/><stop offset="0.38" stop-color="#4d00b2"/><stop offset="0.405" stop-color="#3400cb"/><stop offset="0.433" stop-color="#2800d7"/><stop offset="0.52" stop-color="#1d00e2"/><stop offset="0.564" stop-color="#2400db"/><stop offset="0.682" stop-color="#5600a9"/><stop offset="0.763" stop-color="#8d0072"/><stop offset="0.819" stop-color="#a4005b"/><stop offset="0.888" stop-color="#8e0071"/><stop offset="0.96" stop-color="#670098"/><stop offset="1" stop-color="#5a00a5"/></linearGradient><linearGradient id="r53"><stop offset="0" stop-color="#2400db"/><stop offset="0.0405" stop-color="#3700c8"/><stop offset="0.0592" stop-color="#4900b6"/><stop offset="0.128" stop-color="#dc0023"/><stop offset="0.143" stop-color="#f5000a"/><stop offset="0.156" stop-color="#ff0200"/><stop offset="0.221" stop-color="#ff1f00"/><stop offset="0.259" stop-color="#ff1600"/><stop offset="0.287" stop-color="#ff0000"/><stop offset="0.312" stop-color="#dc0023"/><stop offset="0.371" stop-color="#62009d"/><stop offset="0.408" stop-color="#3100ce"/><stop offset="0.436" stop-color="#2300dc"/><stop offset="0.495" stop-color="#1f00e0"/><stop offset="0.592" stop-color="#3900c6"/><stop offset="0.673" stop-color="#4100be"/><stop offset="0.76" stop-color="#6f0090"/><stop offset="0.804" stop-color="#7c0083"/><stop offset="0.826" stop-color="#780087"/><stop offset="0.875" stop-color="#5400ab"/><stop offset="1" stop-color="#5300ac"/></linearGradient><linearGradient id="r54"><stop offset="0" stop-color="#2c00d3"/><stop offset="0.0592" stop-color="#4c00b3"/><stop offset="0.121" stop-color="#b0004f"/><stop offset="0.15" stop-color="#d0002f"/><stop offset="0.181" stop-color="#e2001d"/><stop offset="0.227" stop-color="#eb0014"/><stop offset="0.262" stop-color="#e80017"/><stop offset="0.299" stop-color="#cc0033"/><stop offset="0.368" stop-color="#64009b"/><stop offset="0.405" stop-color="#3900c6"/><stop offset="0.424" stop-color="#2f00d0"/><stop offset="0.48" stop-color="#2b00d4"/><stop offset="0.526" stop-color="#3e00c1"/><stop offset="0.583" stop-color="#4a00b5"/><stop offset="0.676" stop-color="#3a00c5"/><stop offset="0.801" stop-color="#71008e"/><stop offset="0.822" stop-color="#690096"/><stop offset="0.872" stop-color="#4000bf"/><stop offset="1" stop-color="#5500aa"/></linearGradient><linearGradient id="r55"><stop offset="0" stop-color="#4500ba"/><stop offset="0.0654" stop-color="#5500aa"/><stop offset="0.153" stop-color="#8d0072"/><stop offset="0.262" stop-color="#a4005b"/><stop offset="0.312" stop-color="#970068"/><stop offset="0.386" stop-color="#4700b8"/><stop offset="0.417" stop-color="#3a00c5"/><stop offset="0.48" stop-color="#3b00c4"/><stop offset="0.586" stop-color="#5700a8"/><stop offset="0.732" stop-color="#5600a9"/><stop offset="0.807" stop-color="#6c0093"/><stop offset="1" stop-color="#62009d"/></linearGradient><linearGradient id="r56"><stop offset="0" stop-color="#5600a9"/><stop offset="0.193" stop-color="#4d00b2"/><stop offset="0.268" stop-color="#81007e"/><stop offset="0.302" stop-color="#91006e"/><stop offset="0.336" stop-color="#7a0085"/><stop offset="0.389" stop-color="#3f00c0"/><stop offset="0.414" stop-color="#3700c8"/><stop offset="0.489" stop-color="#3d00c2"/><stop offset="0.667" stop-color="#670098"/><stop offset="0.779" stop-color="#4c00b3"/><stop offset="0.894" stop-color="#a0005f"/><stop offset="0.931" stop-color="#960069"/><stop offset="1" stop-color="#73008c"/></linearGradient><linearGradient id="r57"><stop offset="0" stop-color="#5700a8"/><stop offset="0.115" stop-color="#3b00c4"/><stop offset="0.181" stop-color="#3500ca"/><stop offset="0.206" stop-color="#4200bd"/><stop offset="0.268" stop-color="#84007b"/><stop offset="0.305" stop-color="#9a0065"/><stop offset="0.34" stop-color="#82007d"/><stop offset="0.399" stop-color="#4900b6"/><stop offset="0.427" stop-color="#3d00c2"/><stop offset="0.526" stop-color="#3800c7"/><stop offset="0.676" stop-color="#65009a"/><stop offset="0.779" stop-color="#4a00b5"/><stop offset="0.822" stop-color="#6c0093"/><stop offset="0.882" stop-color="#ab0054"/><stop offset="0.897" stop-color="#b2004d"/><stop offset="0.935" stop-color="#a5005a"/><stop offset="1" stop-color="#780087"/></linearGradient><linearGradient id="r58"><stop offset="0" stop-color="#5d00a2"/><stop offset="0.0903" stop-color="#3d00c2"/><stop offset="0.121" stop-color="#3c00c3"/><stop offset="0.171" stop-color="#4c00b3"/><stop offset="0.243" stop-color="#8a0075"/><stop offset="0.296" stop-color="#9d0062"/><stop offset="0.315" stop-color="#960069"/><stop offset="0.417" stop-color="#4c00b3"/><stop offset="0.48" stop-color="#4200bd"/><stop offset="0.526" stop-color="#2c00d3"/><stop offset="0.57" stop-color="#3100ce"/><stop offset="0.657" stop-color="#4c00b3"/><stop offset="0.729" stop-color="#6e0091"/><stop offset="0.832" stop-color="#85007a"/><stop offset="0.888" stop-color="#9a0065"/><stop offset="1" stop-color="#6c0093"/></linearGradient><linearGradient id="r59"><stop offset="0" stop-color="#860079"/><stop offset="0.0872" stop-color="#60009f"/><stop offset="0.112" stop-color="#5d00a2"/><stop offset="0.168" stop-color="#6d0092"/><stop offset="0.234" stop-color="#9b0064"/><stop offset="0.265" stop-color="#9e0061"/><stop offset="0.358" stop-color="#60009f"/><stop offset="0.414" stop-color="#4c00b3"/><stop offset="0.48" stop-color="#4700b8"/><stop offset="0.517" stop-color="#3100ce"/><stop offset="0.536" stop-color="#2f00d0"/><stop offset="0.66" stop-color="#3c00c3"/><stop offset="0.751" stop-color="#9b0064"/><stop offset="0.785" stop-color="#aa0055"/><stop offset="0.813" stop-color="#a4005b"/><stop offset="0.869" stop-color="#7a0085"/><stop offset="0.938" stop-color="#63009c"/><stop offset="1" stop-color="#5a00a5"/></linearGradient><linearGradient id="r60"><stop offset="0" stop-color="#c90036"/><stop offset="0.0405" stop-color="#c0003f"/><stop offset="0.0997" stop-color="#980067"/><stop offset="0.137" stop-color="#8e0071"/><stop offset="0.174" stop-color="#8e0071"/><stop offset="0.227" stop-color="#a80057"/><stop offset="0.246" stop-color="#a90056"/><stop offset="0.271" stop-color="#990066"/><stop offset="0.315" stop-color="#5800a7"/><stop offset="0.34" stop-color="#4700b8"/><stop offset="0.474" stop-color="#4a00b5"/><stop offset="0.53" stop-color="#3000cf"/><stop offset="0.611" stop-color="#3300cc"/><stop offset="0.664" stop-color="#4100be"/><stop offset="0.748" stop-color="#a80057"/><stop offset="0.766" stop-color="#b90046"/><stop offset="0.782" stop-color="#bb0044"/><stop offset="0.813" stop-color="#af0050"/><stop offset="0.857" stop-color="#6d0092"/><stop offset="0.875" stop-color="#5d00a2"/><stop offset="0.935" stop-color="#4800b7"/><stop offset="1" stop-color="#4600b9"/></linearGradient><linearGradient id="r61"><stop offset="0" stop-color="#ff1e00"/><stop offset="0.0436" stop-color="#ff2300"/><stop offset="0.0872" stop-color="#ff0100"/><stop offset="0.168" stop-color="#cc0033"/><stop offset="0.243" stop-color="#cb0034"/><stop offset="0.277" stop-color="#ab0054"/><stop offset="0.343" stop-color="#5100ae"/><stop offset="0.383" stop-color="#3f00c0"/><stop offset="0.47" stop-color="#4800b7"/><stop offset="0.526" stop-color="#2d00d2"/><stop offset="0.614" stop-color="#3000cf"/><stop offset="0.67" stop-color="#4700b8"/><stop offset="0.726" stop-color="#8b0074"/><stop offset="0.76" stop-color="#a90056"/><stop offset="0.779" stop-color="#b0004f"/><stop offset="0.813" stop-color="#a0005f"/><stop offset="0.86" stop-color="#5e00a1"/><stop offset="0.879" stop-color="#4d00b2"/><stop offset="0.941" stop-color="#3500ca"/><stop offset="1" stop-color="#3400cb"/></linearGradient><linearGradient id="r62"><stop offset="0" stop-color="#ff6f00"/><stop offset="0.0374" stop-color="#ff8400"/><stop offset="0.0561" stop-color="#ff8300"/><stop offset="0.106" stop-color="#ff5c00"/><stop offset="0.171" stop-color="#ff1a00"/><stop offset="0.234" stop-color="#fd0002"/><stop offset="0.29" stop-color="#c2003d"/><stop offset="0.355" stop-color="#5500aa"/><stop offset="0.389" stop-color="#3300cc"/><stop offset="0.467" stop-color="#4700b8"/><stop offset="0.53" stop-color="#3200cd"/><stop offset="0.617" stop-color="#2f00d0"/><stop offset="0.673" stop-color="#4300bc"/><stop offset="0.732" stop-color="#790086"/><stop offset="0.782" stop-color="#94006b"/><stop offset="0.81" stop-color="#890076"/><stop offset="0.866" stop-color="#5600a9"/><stop offset="0.894" stop-color="#4400bb"/><stop offset="0.96" stop-color="#2c00d3"/><stop offset="1" stop-color="#2e00d1"/></linearGradient><linearGradient id="r63"><stop offset="0" stop-color="#ff9c00"/><stop offset="0.0436" stop-color="#ffc100"/><stop offset="0.0623" stop-color="#ffc100"/><stop offset="0.0935" stop-color="#ff9f00"/><stop offset="0.131" stop-color="#ff6100"/><stop offset="0.156" stop-color="#ff4300"/><stop offset="0.24" stop-color="#ff0100"/><stop offset="0.29" stop-color="#c2003d"/><stop offset="0.368" stop-color="#4600b9"/><stop offset="0.386" stop-color="#3700c8"/><stop offset="0.439" stop-color="#5300ac"/><stop offset="0.467" stop-color="#5800a7"/><stop offset="0.533" stop-color="#3c00c3"/><stop offset="0.614" stop-color="#3700c8"/><stop offset="0.688" stop-color="#4a00b5"/><stop offset="0.782" stop-color="#780087"/><stop offset="0.807" stop-color="#7e0081"/><stop offset="0.835" stop-color="#770088"/><stop offset="0.938" stop-color="#4000bf"/><stop offset="1" stop-color="#3900c6"/></linearGradient><linearGradient id="r64"><stop offset="0" stop-color="#ffa400"/><stop offset="0.0467" stop-color="#ffd800"/><stop offset="0.0654" stop-color="#ffd500"/><stop offset="0.0779" stop-color="#ffc200"/><stop offset="0.0935" stop-color="#ff9b00"/><stop offset="0.128" stop-color="#ff2100"/><stop offset="0.14" stop-color="#ff0000"/><stop offset="0.156" stop-color="#ee0011"/><stop offset="0.252" stop-color="#c60039"/><stop offset="0.324" stop-color="#6f0090"/><stop offset="0.377" stop-color="#5200ad"/><stop offset="0.396" stop-color="#5600a9"/><stop offset="0.442" stop-color="#74008b"/><stop offset="0.47" stop-color="#790086"/><stop offset="0.489" stop-color="#6e0091"/><stop offset="0.526" stop-color="#3e00c1"/><stop offset="0.57" stop-color="#3300cc"/><stop offset="0.66" stop-color="#4b00b4"/><stop offset="0.757" stop-color="#5500aa"/><stop offset="0.829" stop-color="#860079"/><stop offset="0.869" stop-color="#780087"/><stop offset="0.935" stop-color="#4d00b2"/><stop offset="1" stop-color="#4200bd"/></linearGradient><linearGradient id="r65"><stop offset="0" stop-color="#ff9200"/><stop offset="0.0436" stop-color="#ffd900"/><stop offset="0.0561" stop-color="#ffdf00"/><stop offset="0.0654" stop-color="#ffda00"/><stop offset="0.0748" stop-color="#ffcb00"/><stop offset="0.0841" stop-color="#ffad00"/><stop offset="0.0997" stop-color="#ff6800"/><stop offset="0.118" stop-color="#ff0400"/><stop offset="0.121" stop-color="#f2000d"/><stop offset="0.137" stop-color="#a80057"/><stop offset="0.143" stop-color="#94006b"/><stop offset="0.153" stop-color="#85007a"/><stop offset="0.255" stop-color="#8b0074"/><stop offset="0.324" stop-color="#4d00b2"/><stop offset="0.352" stop-color="#5200ad"/><stop offset="0.436" stop-color="#7d0082"/><stop offset="0.467" stop-color="#84007b"/><stop offset="0.486" stop-color="#7b0084"/><stop offset="0.523" stop-color="#4100be"/><stop offset="0.555" stop-color="#3600c9"/><stop offset="0.573" stop-color="#3800c7"/><stop offset="0.654" stop-color="#5d00a2"/><stop offset="0.773" stop-color="#5700a8"/><stop offset="0.829" stop-color="#760089"/><stop offset="0.863" stop-color="#6b0094"/><stop offset="0.928" stop-color="#4400bb"/><stop offset="1" stop-color="#3f00c0"/></linearGradient><linearGradient id="r66"><stop offset="0" stop-color="#ff6700"/><stop offset="0.0374" stop-color="#ffc300"/><stop offset="0.0467" stop-color="#ffd100"/><stop offset="0.0592" stop-color="#ffd700"/><stop offset="0.0717" stop-color="#ffca00"/><stop offset="0.081" stop-color="#ffae00"/><stop offset="0.0935" stop-color="#ff7600"/><stop offset="0.115" stop-color="#ff0500"/><stop offset="0.118" stop-color="#f4000b"/><stop offset="0.14" stop-color="#9a0065"/><stop offset="0.156" stop-color="#7b0084"/><stop offset="0.234" stop-color="#7f0080"/><stop offset="0.262" stop-color="#75008a"/><stop offset="0.327" stop-color="#4b00b4"/><stop offset="0.352" stop-color="#4c00b3"/><stop offset="0.43" stop-color="#6c0093"/><stop offset="0.47" stop-color="#72008d"/><stop offset="0.486" stop-color="#6c0093"/><stop offset="0.517" stop-color="#4b00b4"/><stop offset="0.539" stop-color="#4800b7"/><stop offset="0.576" stop-color="#5100ae"/><stop offset="0.639" stop-color="#760089"/><stop offset="0.66" stop-color="#7b0084"/><stop offset="0.717" stop-color="#73008c"/><stop offset="0.785" stop-color="#5200ad"/><stop offset="0.857" stop-color="#4f00b0"/><stop offset="0.916" stop-color="#3900c6"/><stop offset="1" stop-color="#3f00c0"/></linearGradient><linearGradient id="r67"><stop offset="0" stop-color="#ff3900"/><stop offset="0.0374" stop-color="#ffa600"/><stop offset="0.0498" stop-color="#ffbc00"/><stop offset="0.0592" stop-color="#ffc300"/><stop offset="0.0685" stop-color="#ffbd00"/><stop offset="0.0779" stop-color="#ffa700"/><stop offset="0.121" stop-color="#fd0002"/><stop offset="0.14" stop-color="#d2002d"/><stop offset="0.156" stop-color="#be0041"/><stop offset="0.218" stop-color="#aa0055"/><stop offset="0.299" stop-color="#60009f"/><stop offset="0.343" stop-color="#4e00b1"/><stop offset="0.474" stop-color="#5400ab"/><stop offset="0.523" stop-color="#4400bb"/><stop offset="0.657" stop-color="#80007f"/><stop offset="0.717" stop-color="#70008f"/><stop offset="0.813" stop-color="#3d00c2"/><stop offset="0.866" stop-color="#4a00b5"/><stop offset="0.919" stop-color="#4300bc"/><stop offset="1" stop-color="#4600b9"/></linearGradient><linearGradient id="r68"><stop offset="0" stop-color="#ff0f00"/><stop offset="0.0405" stop-color="#ff8600"/><stop offset="0.053" stop-color="#ff9e00"/><stop offset="0.0623" stop-color="#ffa600"/><stop offset="0.0779" stop-color="#ff9200"/><stop offset="0.121" stop-color="#ff1400"/><stop offset="0.137" stop-color="#fe0001"/><stop offset="0.187" stop-color="#ea0015"/><stop offset="0.218" stop-color="#d4002b"/><stop offset="0.296" stop-color="#5300ac"/><stop offset="0.312" stop-color="#4500ba"/><stop offset="0.514" stop-color="#3f00c0"/><stop offset="0.645" stop-color="#62009d"/><stop offset="0.751" stop-color="#4900b6"/><stop offset="0.857" stop-color="#5200ad"/><stop offset="1" stop-color="#4b00b4"/></linearGradient><linearGradient id="r69"><stop offset="0" stop-color="#d5002a"/><stop offset="0.0156" stop-color="#fc0003"/><stop offset="0.0187" stop-color="#ff0700"/><stop offset="0.0467" stop-color="#ff5600"/><stop offset="0.0561" stop-color="#ff6700"/><stop offset="0.0654" stop-color="#ff6e00"/><stop offset="0.0779" stop-color="#ff6100"/><stop offset="0.115" stop-color="#ff1200"/><stop offset="0.128" stop-color="#fe0001"/><stop offset="0.14" stop-color="#f90006"/><stop offset="0.184" stop-color="#ff0b00"/><stop offset="0.206" stop-color="#ff0000"/><stop offset="0.227" stop-color="#e5001a"/><stop offset="0.293" stop-color="#5600a9"/><stop offset="0.312" stop-color="#4000bf"/><stop offset="0.34" stop-color="#4700b8"/><stop offset="0.383" stop-color="#3e00c1"/><stop offset="0.47" stop-color="#4600b9"/><stop offset="0.52" stop-color="#5500aa"/><stop offset="0.729" stop-color="#3500ca"/><stop offset="0.826" stop-color="#660099"/><stop offset="0.888" stop-color="#4700b8"/><stop offset="1" stop-color="#4900b6"/></linearGradient><linearGradient id="r70"><stop offset="0" stop-color="#94006b"/><stop offset="0.0436" stop-color="#e70018"/><stop offset="0.0592" stop-color="#fe0001"/><stop offset="0.0748" stop-color="#fd0002"/><stop offset="0.112" stop-color="#d1002e"/><stop offset="0.128" stop-color="#c90036"/><stop offset="0.143" stop-color="#d4002b"/><stop offset="0.171" stop-color="#ff0100"/><stop offset="0.193" stop-color="#ff1300"/><stop offset="0.218" stop-color="#ff0200"/><stop offset="0.231" stop-color="#ec0013"/><stop offset="0.262" stop-color="#a0005f"/><stop offset="0.277" stop-color="#82007d"/><stop offset="0.302" stop-color="#5f00a0"/><stop offset="0.321" stop-color="#5200ad"/><stop offset="0.467" stop-color="#4d00b2"/><stop offset="0.52" stop-color="#65009a"/><stop offset="0.551" stop-color="#5600a9"/><stop offset="0.592" stop-color="#3300cc"/><stop offset="0.607" stop-color="#3000cf"/><stop offset="0.67" stop-color="#3b00c4"/><stop offset="0.738" stop-color="#3b00c4"/><stop offset="0.826" stop-color="#70008f"/><stop offset="0.841" stop-color="#690096"/><stop offset="0.888" stop-color="#3e00c1"/><stop offset="0.938" stop-color="#4600b9"/><stop offset="1" stop-color="#4400bb"/></linearGradient><linearGradient id="r71"><stop offset="0" stop-color="#5e00a1"/><stop offset="0.0623" stop-color="#91006e"/><stop offset="0.109" stop-color="#80007f"/><stop offset="0.121" stop-color="#83007c"/><stop offset="0.134" stop-color="#960069"/><stop offset="0.165" stop-color="#e1001e"/><stop offset="0.181" stop-color="#ff0100"/><stop offset="0.196" stop-color="#ff1200"/><stop offset="0.218" stop-color="#ff0200"/><stop offset="0.231" stop-color="#ec0013"/><stop offset="0.262" stop-color="#960069"/><stop offset="0.274" stop-color="#7c0083"/><stop offset="0.29" stop-color="#6a0095"/><stop offset="0.321" stop-color="#5a00a5"/><stop offset="0.371" stop-color="#60009f"/><stop offset="0.433" stop-color="#4800b7"/><stop offset="0.464" stop-color="#4400bb"/><stop offset="0.52" stop-color="#5a00a5"/><stop offset="0.601" stop-color="#2200dd"/><stop offset="0.673" stop-color="#4200bd"/><stop offset="0.751" stop-color="#3f00c0"/><stop offset="0.816" stop-color="#6e0091"/><stop offset="0.841" stop-color="#75008a"/><stop offset="0.9" stop-color="#4c00b3"/><stop offset="0.956" stop-color="#3d00c2"/><stop offset="1" stop-color="#3c00c3"/></linearGradient><linearGradient id="r72"><stop offset="0" stop-color="#3d00c2"/><stop offset="0.0685" stop-color="#5500aa"/><stop offset="0.109" stop-color="#4c00b3"/><stop offset="0.118" stop-color="#5000af"/><stop offset="0.128" stop-color="#61009e"/><stop offset="0.159" stop-color="#bb0044"/><stop offset="0.184" stop-color="#f5000a"/><stop offset="0.19" stop-color="#ff0000"/><stop offset="0.199" stop-color="#ff0700"/><stop offset="0.212" stop-color="#ff0100"/><stop offset="0.231" stop-color="#e4001b"/><stop offset="0.271" stop-color="#70008f"/><stop offset="0.29" stop-color="#5900a6"/><stop offset="0.355" stop-color="#60009f"/><stop offset="0.464" stop-color="#3300cc"/><stop offset="0.52" stop-color="#4400bb"/><stop offset="0.598" stop-color="#2000df"/><stop offset="0.673" stop-color="#4100be"/><stop offset="0.757" stop-color="#3500ca"/><stop offset="0.838" stop-color="#780087"/><stop offset="0.857" stop-color="#81007e"/><stop offset="0.95" stop-color="#3c00c3"/><stop offset="1" stop-color="#3700c8"/></linearGradient><linearGradient id="r73"><stop offset="0" stop-color="#3400cb"/><stop offset="0.0748" stop-color="#4900b6"/><stop offset="0.118" stop-color="#3c00c3"/><stop offset="0.131" stop-color="#5200ad"/><stop offset="0.187" stop-color="#e4001b"/><stop offset="0.202" stop-color="#f3000c"/><stop offset="0.215" stop-color="#ea0015"/><stop offset="0.227" stop-color="#d60029"/><stop offset="0.259" stop-color="#7d0082"/><stop offset="0.268" stop-color="#690096"/><stop offset="0.296" stop-color="#5600a9"/><stop offset="0.364" stop-color="#5500aa"/><stop offset="0.464" stop-color="#2e00d1"/><stop offset="0.517" stop-color="#3900c6"/><stop offset="0.595" stop-color="#2600d9"/><stop offset="0.673" stop-color="#3f00c0"/><stop offset="0.76" stop-color="#3200cd"/><stop offset="0.863" stop-color="#790086"/><stop offset="0.956" stop-color="#3600c9"/><stop offset="1" stop-color="#3200cd"/></linearGradient><linearGradient id="r74"><stop offset="0" stop-color="#3f00c0"/><stop offset="0.0685" stop-color="#4600b9"/><stop offset="0.121" stop-color="#3800c7"/><stop offset="0.15" stop-color="#690096"/><stop offset="0.187" stop-color="#cc0033"/><stop offset="0.199" stop-color="#de0021"/><stop offset="0.212" stop-color="#d5002a"/><stop offset="0.224" stop-color="#bf0040"/><stop offset="0.255" stop-color="#64009b"/><stop offset="0.265" stop-color="#5300ac"/><stop offset="0.312" stop-color="#3f00c0"/><stop offset="0.371" stop-color="#5400ab"/><stop offset="0.464" stop-color="#3800c7"/><stop offset="0.589" stop-color="#3300cc"/><stop offset="0.673" stop-color="#4400bb"/><stop offset="0.754" stop-color="#3400cb"/><stop offset="0.872" stop-color="#5d00a2"/><stop offset="0.963" stop-color="#3200cd"/><stop offset="1" stop-color="#3100ce"/></linearGradient><linearGradient id="r75"><stop offset="0" stop-color="#4400bb"/><stop offset="0.103" stop-color="#3500ca"/><stop offset="0.125" stop-color="#3900c6"/><stop offset="0.153" stop-color="#64009b"/><stop offset="0.165" stop-color="#81007e"/><stop offset="0.187" stop-color="#c1003e"/><stop offset="0.199" stop-color="#d2002d"/><stop offset="0.209" stop-color="#ca0035"/><stop offset="0.221" stop-color="#b4004b"/><stop offset="0.262" stop-color="#5400ab"/><stop offset="0.271" stop-color="#4b00b4"/><stop offset="0.308" stop-color="#4200bd"/><stop offset="0.371" stop-color="#5200ad"/><stop offset="0.467" stop-color="#3300cc"/><stop offset="0.667" stop-color="#4a00b5"/><stop offset="0.745" stop-color="#3000cf"/><stop offset="0.807" stop-color="#3f00c0"/><stop offset="1" stop-color="#4200bd"/></linearGradient><linearGradient id="r76"><stop offset="0" stop-color="#3b00c4"/><stop offset="0.0841" stop-color="#2d00d2"/><stop offset="0.125" stop-color="#3d00c2"/><stop offset="0.143" stop-color="#5b00a4"/><stop offset="0.187" stop-color="#d3002c"/><stop offset="0.196" stop-color="#e0001f"/><stop offset="0.209" stop-color="#d5002a"/><stop offset="0.255" stop-color="#70008f"/><stop offset="0.271" stop-color="#5c00a3"/><stop offset="0.349" stop-color="#5400ab"/><stop offset="0.452" stop-color="#3000cf"/><stop offset="0.526" stop-color="#3400cb"/><stop offset="0.614" stop-color="#4a00b5"/><stop offset="0.673" stop-color="#4300bc"/><stop offset="0.738" stop-color="#2900d6"/><stop offset="0.804" stop-color="#3700c8"/><stop offset="0.863" stop-color="#2b00d4"/><stop offset="0.882" stop-color="#3100ce"/><stop offset="0.935" stop-color="#5600a9"/><stop offset="1" stop-color="#5d00a2"/></linearGradient><linearGradient id="r77"><stop offset="0" stop-color="#3000cf"/><stop offset="0.0779" stop-color="#2900d6"/><stop offset="0.121" stop-color="#4200bd"/><stop offset="0.137" stop-color="#5c00a3"/><stop offset="0.181" stop-color="#e60019"/><stop offset="0.193" stop-color="#fc0003"/><stop offset="0.206" stop-color="#ef0010"/><stop offset="0.243" stop-color="#7e0081"/><stop offset="0.262" stop-color="#5c00a3"/><stop offset="0.324" stop-color="#5600a9"/><stop offset="0.393" stop-color="#3600c9"/><stop offset="0.477" stop-color="#3f00c0"/><stop offset="0.53" stop-color="#2c00d3"/><stop offset="0.611" stop-color="#4400bb"/><stop offset="0.741" stop-color="#2800d7"/><stop offset="0.801" stop-color="#3900c6"/><stop offset="0.857" stop-color="#3700c8"/><stop offset="0.913" stop-color="#660099"/><stop offset="0.938" stop-color="#73008c"/><stop offset="1" stop-color="#6e0091"/></linearGradient><linearGradient id="r78"><stop offset="0" stop-color="#2500da"/><stop offset="0.0592" stop-color="#2000df"/><stop offset="0.121" stop-color="#4800b7"/><stop offset="0.137" stop-color="#680097"/><stop offset="0.171" stop-color="#dd0022"/><stop offset="0.184" stop-color="#ff0100"/><stop offset="0.193" stop-color="#ff0900"/><stop offset="0.202" stop-color="#f80007"/><stop offset="0.215" stop-color="#ce0031"/><stop offset="0.24" stop-color="#6a0095"/><stop offset="0.249" stop-color="#5000af"/><stop offset="0.255" stop-color="#4700b8"/><stop offset="0.308" stop-color="#5100ae"/><stop offset="0.374" stop-color="#2d00d2"/><stop offset="0.405" stop-color="#2f00d0"/><stop offset="0.474" stop-color="#4900b6"/><stop offset="0.523" stop-color="#3000cf"/><stop offset="0.607" stop-color="#3a00c5"/><stop offset="0.673" stop-color="#2600d9"/><stop offset="0.704" stop-color="#2500da"/><stop offset="0.754" stop-color="#2d00d2"/><stop offset="0.841" stop-color="#4b00b4"/><stop offset="0.925" stop-color="#780087"/><stop offset="1" stop-color="#680097"/></linearGradient><linearGradient id="r79"><stop offset="0" stop-color="#2200dd"/><stop offset="0.0592" stop-color="#2100de"/><stop offset="0.121" stop-color="#4500ba"/><stop offset="0.134" stop-color="#5d00a2"/><stop offset="0.174" stop-color="#e2001d"/><stop offset="0.187" stop-color="#ff0200"/><stop offset="0.202" stop-color="#f90006"/><stop offset="0.212" stop-color="#de0021"/><stop offset="0.243" stop-color="#6f0090"/><stop offset="0.259" stop-color="#4f00b0"/><stop offset="0.271" stop-color="#4800b7"/><stop offset="0.308" stop-color="#4e00b1"/><stop offset="0.368" stop-color="#3200cd"/><stop offset="0.474" stop-color="#4800b7"/><stop offset="0.523" stop-color="#3300cc"/><stop offset="0.617" stop-color="#3300cc"/><stop offset="0.698" stop-color="#2400db"/><stop offset="0.763" stop-color="#3000cf"/><stop offset="0.869" stop-color="#65009a"/><stop offset="0.925" stop-color="#65009a"/><stop offset="1" stop-color="#4f00b0"/></linearGradient><linearGradient id="r80"><stop offset="0" stop-color="#2c00d3"/><stop offset="0.0623" stop-color="#3100ce"/><stop offset="0.125" stop-color="#4600b9"/><stop offset="0.137" stop-color="#5f00a0"/><stop offset="0.184" stop-color="#eb0014"/><stop offset="0.196" stop-color="#ff0300"/><stop offset="0.206" stop-color="#ff0100"/><stop offset="0.212" stop-color="#f5000a"/><stop offset="0.262" stop-color="#65009a"/><stop offset="0.271" stop-color="#5500aa"/><stop offset="0.283" stop-color="#4d00b2"/><stop offset="0.364" stop-color="#3e00c1"/><stop offset="0.474" stop-color="#4600b9"/><stop offset="0.53" stop-color="#3200cd"/><stop offset="0.738" stop-color="#2f00d0"/><stop offset="0.763" stop-color="#3600c9"/><stop offset="0.838" stop-color="#680097"/><stop offset="0.86" stop-color="#6f0090"/><stop offset="0.966" stop-color="#4100be"/><stop offset="1" stop-color="#3c00c3"/></linearGradient><linearGradient id="r81"><stop offset="0" stop-color="#2f00d0"/><stop offset="0.0436" stop-color="#3a00c5"/><stop offset="0.0935" stop-color="#3a00c5"/><stop offset="0.125" stop-color="#4500ba"/><stop offset="0.14" stop-color="#5e00a1"/><stop offset="0.19" stop-color="#e1001e"/><stop offset="0.202" stop-color="#f5000a"/><stop offset="0.209" stop-color="#f3000c"/><stop offset="0.218" stop-color="#e1001e"/><stop offset="0.265" stop-color="#5d00a2"/><stop offset="0.274" stop-color="#4f00b0"/><stop offset="0.287" stop-color="#4900b6"/><stop offset="0.343" stop-color="#3d00c2"/><stop offset="0.474" stop-color="#4400bb"/><stop offset="0.53" stop-color="#3100ce"/><stop offset="0.688" stop-color="#4600b9"/><stop offset="0.741" stop-color="#3200cd"/><stop offset="0.854" stop-color="#680097"/><stop offset="0.963" stop-color="#3a00c5"/><stop offset="1" stop-color="#3700c8"/></linearGradient><linearGradient id="r82"><stop offset="0" stop-color="#2e00d1"/><stop offset="0.0436" stop-color="#4100be"/><stop offset="0.0903" stop-color="#3000cf"/><stop offset="0.128" stop-color="#4300bc"/><stop offset="0.143" stop-color="#5800a7"/><stop offset="0.19" stop-color="#c60039"/><stop offset="0.202" stop-color="#d60029"/><stop offset="0.215" stop-color="#c5003a"/><stop offset="0.246" stop-color="#6b0094"/><stop offset="0.262" stop-color="#4d00b2"/><stop offset="0.336" stop-color="#3200cd"/><stop offset="0.467" stop-color="#3c00c3"/><stop offset="0.52" stop-color="#2c00d3"/><stop offset="0.573" stop-color="#2e00d1"/><stop offset="0.601" stop-color="#3500ca"/><stop offset="0.651" stop-color="#5000af"/><stop offset="0.741" stop-color="#3600c9"/><stop offset="0.844" stop-color="#5100ae"/><stop offset="0.938" stop-color="#3e00c1"/><stop offset="1" stop-color="#3900c6"/></linearGradient><linearGradient id="r83"><stop offset="0" stop-color="#3400cb"/><stop offset="0.0405" stop-color="#4c00b3"/><stop offset="0.0903" stop-color="#3000cf"/><stop offset="0.134" stop-color="#4200bd"/><stop offset="0.15" stop-color="#5400ab"/><stop offset="0.19" stop-color="#b60049"/><stop offset="0.202" stop-color="#c4003b"/><stop offset="0.212" stop-color="#b70048"/><stop offset="0.24" stop-color="#5f00a0"/><stop offset="0.252" stop-color="#4900b6"/><stop offset="0.355" stop-color="#2b00d4"/><stop offset="0.467" stop-color="#3400cb"/><stop offset="0.523" stop-color="#2700d8"/><stop offset="0.586" stop-color="#2900d6"/><stop offset="0.607" stop-color="#3000cf"/><stop offset="0.648" stop-color="#4f00b0"/><stop offset="0.788" stop-color="#3900c6"/><stop offset="0.844" stop-color="#4600b9"/><stop offset="0.882" stop-color="#3b00c4"/><stop offset="1" stop-color="#3900c6"/></linearGradient><linearGradient id="r84"><stop offset="0" stop-color="#4200bd"/><stop offset="0.0436" stop-color="#63009c"/><stop offset="0.0935" stop-color="#4700b8"/><stop offset="0.14" stop-color="#4300bc"/><stop offset="0.156" stop-color="#5800a7"/><stop offset="0.187" stop-color="#ae0051"/><stop offset="0.199" stop-color="#c0003f"/><stop offset="0.209" stop-color="#b70048"/><stop offset="0.231" stop-color="#72008d"/><stop offset="0.243" stop-color="#5b00a4"/><stop offset="0.368" stop-color="#2800d7"/><stop offset="0.461" stop-color="#3100ce"/><stop offset="0.523" stop-color="#2700d8"/><stop offset="0.598" stop-color="#2b00d4"/><stop offset="0.642" stop-color="#3e00c1"/><stop offset="0.732" stop-color="#5300ac"/><stop offset="0.925" stop-color="#3600c9"/><stop offset="1" stop-color="#3400cb"/></linearGradient><linearGradient id="r85"><stop offset="0" stop-color="#4b00b4"/><stop offset="0.0343" stop-color="#75008a"/><stop offset="0.0467" stop-color="#7c0083"/><stop offset="0.118" stop-color="#5600a9"/><stop offset="0.134" stop-color="#5600a9"/><stop offset="0.153" stop-color="#72008d"/><stop offset="0.187" stop-color="#ce0031"/><stop offset="0.196" stop-color="#d80027"/><stop offset="0.209" stop-color="#c4003b"/><stop offset="0.227" stop-color="#80007f"/><stop offset="0.237" stop-color="#6b0094"/><stop offset="0.265" stop-color="#6a0095"/><stop offset="0.302" stop-color="#4000bf"/><stop offset="0.34" stop-color="#2f00d0"/><stop offset="0.523" stop-color="#2800d7"/><stop offset="0.598" stop-color="#2d00d2"/><stop offset="0.654" stop-color="#3600c9"/><stop offset="0.695" stop-color="#4f00b0"/><stop offset="0.735" stop-color="#4c00b3"/><stop offset="0.782" stop-color="#5400ab"/><stop offset="0.922" stop-color="#3500ca"/><stop offset="1" stop-color="#3100ce"/></linearGradient><linearGradient id="r86"><stop offset="0" stop-color="#4500ba"/><stop offset="0.0312" stop-color="#70008f"/><stop offset="0.0436" stop-color="#7a0085"/><stop offset="0.081" stop-color="#6a0095"/><stop offset="0.128" stop-color="#71008e"/><stop offset="0.146" stop-color="#92006d"/><stop offset="0.184" stop-color="#f80007"/><stop offset="0.193" stop-color="#ff0100"/><stop offset="0.202" stop-color="#f2000d"/><stop offset="0.227" stop-color="#9c0063"/><stop offset="0.24" stop-color="#7e0081"/><stop offset="0.265" stop-color="#6a0095"/><stop offset="0.299" stop-color="#4100be"/><stop offset="0.327" stop-color="#3000cf"/><stop offset="0.393" stop-color="#3500ca"/><stop offset="0.52" stop-color="#2800d7"/><stop offset="0.604" stop-color="#2e00d1"/><stop offset="0.639" stop-color="#3400cb"/><stop offset="0.688" stop-color="#5200ad"/><stop offset="0.738" stop-color="#3c00c3"/><stop offset="0.794" stop-color="#5400ab"/><stop offset="0.91" stop-color="#3400cb"/><stop offset="1" stop-color="#3100ce"/></linearGradient><linearGradient id="r87"><stop offset="0" stop-color="#3700c8"/><stop offset="0.0374" stop-color="#63009c"/><stop offset="0.0467" stop-color="#65009a"/><stop offset="0.0748" stop-color="#5400ab"/><stop offset="0.121" stop-color="#74008b"/><stop offset="0.146" stop-color="#9f0060"/><stop offset="0.181" stop-color="#f90006"/><stop offset="0.19" stop-color="#ff0700"/><stop offset="0.196" stop-color="#ff0300"/><stop offset="0.206" stop-color="#eb0014"/><stop offset="0.237" stop-color="#870078"/><stop offset="0.249" stop-color="#6d0092"/><stop offset="0.274" stop-color="#5300ac"/><stop offset="0.324" stop-color="#3200cd"/><stop offset="0.374" stop-color="#3500ca"/><stop offset="0.533" stop-color="#2700d8"/><stop offset="0.626" stop-color="#3100ce"/><stop offset="0.692" stop-color="#5200ad"/><stop offset="0.754" stop-color="#3b00c4"/><stop offset="0.794" stop-color="#5400ab"/><stop offset="0.897" stop-color="#3400cb"/><stop offset="1" stop-color="#3100ce"/></linearGradient><linearGradient id="r88"><stop offset="0" stop-color="#2900d6"/><stop offset="0.0467" stop-color="#5800a7"/><stop offset="0.0779" stop-color="#5600a9"/><stop offset="0.125" stop-color="#60009f"/><stop offset="0.153" stop-color="#8d0072"/><stop offset="0.184" stop-color="#d60029"/><stop offset="0.193" stop-color="#dd0022"/><stop offset="0.206" stop-color="#c80037"/><stop offset="0.234" stop-color="#6e0091"/><stop offset="0.246" stop-color="#5300ac"/><stop offset="0.324" stop-color="#3300cc"/><stop offset="0.371" stop-color="#3800c7"/><stop offset="0.421" stop-color="#2d00d2"/><stop offset="0.474" stop-color="#3300cc"/><stop offset="0.539" stop-color="#2500da"/><stop offset="0.626" stop-color="#2d00d2"/><stop offset="0.695" stop-color="#4a00b5"/><stop offset="0.754" stop-color="#4b00b4"/><stop offset="0.785" stop-color="#5900a6"/><stop offset="0.857" stop-color="#3500ca"/><stop offset="1" stop-color="#3100ce"/></linearGradient><linearGradient id="r89"><stop offset="0" stop-color="#2600d9"/><stop offset="0.0187" stop-color="#3300cc"/><stop offset="0.0467" stop-color="#5e00a1"/><stop offset="0.0561" stop-color="#65009a"/><stop offset="0.106" stop-color="#4800b7"/><stop offset="0.128" stop-color="#4a00b5"/><stop offset="0.156" stop-color="#6c0093"/><stop offset="0.184" stop-color="#a3005c"/><stop offset="0.193" stop-color="#ad0052"/><stop offset="0.209" stop-color="#990066"/><stop offset="0.237" stop-color="#4700b8"/><stop offset="0.249" stop-color="#3b00c4"/><stop offset="0.28" stop-color="#4500ba"/><stop offset="0.324" stop-color="#3300cc"/><stop offset="0.371" stop-color="#3b00c4"/><stop offset="0.474" stop-color="#3900c6"/><stop offset="0.517" stop-color="#2400db"/><stop offset="0.542" stop-color="#2300dc"/><stop offset="0.636" stop-color="#2c00d3"/><stop offset="0.745" stop-color="#4b00b4"/><stop offset="0.782" stop-color="#63009c"/><stop offset="0.822" stop-color="#3c00c3"/><stop offset="0.854" stop-color="#2f00d0"/><stop offset="0.907" stop-color="#3a00c5"/><stop offset="1" stop-color="#3100ce"/></linearGradient><linearGradient id="r90"><stop offset="0" stop-color="#3000cf"/><stop offset="0.053" stop-color="#6b0094"/><stop offset="0.0654" stop-color="#64009b"/><stop offset="0.0966" stop-color="#3f00c0"/><stop offset="0.128" stop-color="#4200bd"/><stop offset="0.162" stop-color="#5600a9"/><stop offset="0.187" stop-color="#83007c"/><stop offset="0.196" stop-color="#8a0075"/><stop offset="0.209" stop-color="#7e0081"/><stop offset="0.234" stop-color="#4500ba"/><stop offset="0.243" stop-color="#3900c6"/><stop offset="0.28" stop-color="#4000bf"/><stop offset="0.318" stop-color="#2e00d1"/><stop offset="0.38" stop-color="#3b00c4"/><stop offset="0.464" stop-color="#3c00c3"/><stop offset="0.526" stop-color="#2200dd"/><stop offset="0.626" stop-color="#2700d8"/><stop offset="0.741" stop-color="#3d00c2"/><stop offset="0.785" stop-color="#660099"/><stop offset="0.794" stop-color="#61009e"/><stop offset="0.822" stop-color="#3a00c5"/><stop offset="0.841" stop-color="#3000cf"/><stop offset="0.866" stop-color="#3000cf"/><stop offset="0.907" stop-color="#4100be"/><stop offset="0.956" stop-color="#3200cd"/><stop offset="1" stop-color="#3100ce"/></linearGradient><linearGradient id="r91"><stop offset="0" stop-color="#3300cc"/><stop offset="0.0374" stop-color="#5900a6"/><stop offset="0.0498" stop-color="#5e00a1"/><stop offset="0.0903" stop-color="#4400bb"/><stop offset="0.153" stop-color="#4200bd"/><stop offset="0.165" stop-color="#4b00b4"/><stop offset="0.19" stop-color="#760089"/><stop offset="0.199" stop-color="#7c0083"/><stop offset="0.212" stop-color="#72008d"/><stop offset="0.246" stop-color="#3b00c4"/><stop offset="0.287" stop-color="#3a00c5"/><stop offset="0.327" stop-color="#2800d7"/><stop offset="0.389" stop-color="#3800c7"/><stop offset="0.458" stop-color="#3900c6"/><stop offset="0.483" stop-color="#3600c9"/><stop offset="0.526" stop-color="#2200dd"/><stop offset="0.636" stop-color="#2700d8"/><stop offset="0.745" stop-color="#3900c6"/><stop offset="0.788" stop-color="#61009e"/><stop offset="0.838" stop-color="#3000cf"/><stop offset="0.86" stop-color="#3200cd"/><stop offset="0.903" stop-color="#4500ba"/><stop offset="0.956" stop-color="#3300cc"/><stop offset="1" stop-color="#3100ce"/></linearGradient><linearGradient id="r92"><stop offset="0" stop-color="#2b00d4"/><stop offset="0.0405" stop-color="#4a00b5"/><stop offset="0.0717" stop-color="#3f00c0"/><stop offset="0.103" stop-color="#4b00b4"/><stop offset="0.146" stop-color="#4b00b4"/><stop offset="0.165" stop-color="#5900a6"/><stop offset="0.193" stop-color="#80007f"/><stop offset="0.202" stop-color="#84007b"/><stop offset="0.215" stop-color="#7a0085"/><stop offset="0.243" stop-color="#4600b9"/><stop offset="0.255" stop-color="#3800c7"/><stop offset="0.296" stop-color="#3a00c5"/><stop offset="0.333" stop-color="#2a00d5"/><stop offset="0.461" stop-color="#3400cb"/><stop offset="0.526" stop-color="#2200dd"/><stop offset="0.636" stop-color="#2600d9"/><stop offset="0.751" stop-color="#3800c7"/><stop offset="0.794" stop-color="#5800a7"/><stop offset="0.841" stop-color="#3700c8"/><stop offset="0.9" stop-color="#4a00b5"/><stop offset="0.947" stop-color="#3300cc"/><stop offset="1" stop-color="#3100ce"/></linearGradient><linearGradient id="r93"><stop offset="0" stop-color="#2300dc"/><stop offset="0.0405" stop-color="#3e00c1"/><stop offset="0.0748" stop-color="#3c00c3"/><stop offset="0.14" stop-color="#5200ad"/><stop offset="0.202" stop-color="#8e0071"/><stop offset="0.215" stop-color="#83007c"/><stop offset="0.246" stop-color="#4400bb"/><stop offset="0.262" stop-color="#3700c8"/><stop offset="0.474" stop-color="#3100ce"/><stop offset="0.526" stop-color="#2100de"/><stop offset="0.611" stop-color="#2200dd"/><stop offset="0.745" stop-color="#3700c8"/><stop offset="0.798" stop-color="#5500aa"/><stop offset="0.844" stop-color="#3f00c0"/><stop offset="0.9" stop-color="#5100ae"/><stop offset="0.935" stop-color="#3000cf"/><stop offset="1" stop-color="#3100ce"/></linearGradient><linearGradient id="r94"><stop offset="0" stop-color="#1e00e1"/><stop offset="0.0343" stop-color="#3300cc"/><stop offset="0.134" stop-color="#4c00b3"/><stop offset="0.168" stop-color="#63009c"/><stop offset="0.206" stop-color="#890076"/><stop offset="0.218" stop-color="#7c0083"/><stop offset="0.249" stop-color="#3e00c1"/><stop offset="0.274" stop-color="#3200cd"/><stop offset="0.47" stop-color="#3100ce"/><stop offset="0.526" stop-color="#2000df"/><stop offset="0.611" stop-color="#2000df"/><stop offset="0.735" stop-color="#3000cf"/><stop offset="0.801" stop-color="#5100ae"/><stop offset="0.847" stop-color="#4300bc"/><stop offset="0.897" stop-color="#5800a7"/><stop offset="0.938" stop-color="#3100ce"/><stop offset="1" stop-color="#3100ce"/></linearGradient><linearGradient id="r95"><stop offset="0" stop-color="#1e00e1"/><stop offset="0.0312" stop-color="#2e00d1"/><stop offset="0.0623" stop-color="#2b00d4"/><stop offset="0.0966" stop-color="#3300cc"/><stop offset="0.15" stop-color="#4f00b0"/><stop offset="0.206" stop-color="#7b0084"/><stop offset="0.215" stop-color="#73008c"/><stop offset="0.237" stop-color="#4800b7"/><stop offset="0.252" stop-color="#3700c8"/><stop offset="0.327" stop-color="#2e00d1"/><stop offset="0.47" stop-color="#3100ce"/><stop offset="0.533" stop-color="#2100de"/><stop offset="0.735" stop-color="#2900d6"/><stop offset="0.76" stop-color="#2e00d1"/><stop offset="0.807" stop-color="#4d00b2"/><stop offset="0.85" stop-color="#4800b7"/><stop offset="0.897" stop-color="#5900a6"/><stop offset="0.941" stop-color="#3300cc"/><stop offset="1" stop-color="#3100ce"/></linearGradient><linearGradient id="r96"><stop offset="0" stop-color="#2100de"/><stop offset="0.0343" stop-color="#2b00d4"/><stop offset="0.0966" stop-color="#2a00d5"/><stop offset="0.202" stop-color="#6d0092"/><stop offset="0.212" stop-color="#660099"/><stop offset="0.227" stop-color="#4800b7"/><stop offset="0.24" stop-color="#3b00c4"/><stop offset="0.336" stop-color="#2e00d1"/><stop offset="0.474" stop-color="#2f00d0"/><stop offset="0.53" stop-color="#2100de"/><stop offset="0.648" stop-color="#2400db"/><stop offset="0.754" stop-color="#2d00d2"/><stop offset="0.81" stop-color="#4b00b4"/><stop offset="0.854" stop-color="#4b00b4"/><stop offset="0.894" stop-color="#5400ab"/><stop offset="0.941" stop-color="#3300cc"/><stop offset="1" stop-color="#3100ce"/></linearGradient><linearGradient id="r97"><stop offset="0" stop-color="#2500da"/><stop offset="0.112" stop-color="#2f00d0"/><stop offset="0.206" stop-color="#60009f"/><stop offset="0.237" stop-color="#4500ba"/><stop offset="0.28" stop-color="#3600c9"/><stop offset="0.477" stop-color="#2c00d3"/><stop offset="0.53" stop-color="#1f00e0"/><stop offset="0.639" stop-color="#2000df"/><stop offset="0.754" stop-color="#3200cd"/><stop offset="0.826" stop-color="#4e00b1"/><stop offset="0.891" stop-color="#4e00b1"/><stop offset="0.938" stop-color="#3300cc"/><stop offset="1" stop-color="#3100ce"/></linearGradient><linearGradient id="r98"><stop offset="0" stop-color="#2600d9"/><stop offset="0.125" stop-color="#3100ce"/><stop offset="0.159" stop-color="#4100be"/><stop offset="0.184" stop-color="#4000bf"/><stop offset="0.215" stop-color="#5a00a5"/><stop offset="0.29" stop-color="#3100ce"/><stop offset="0.474" stop-color="#2b00d4"/><stop offset="0.533" stop-color="#1f00e0"/><stop offset="0.598" stop-color="#1e00e1"/><stop offset="0.754" stop-color="#3100ce"/><stop offset="0.835" stop-color="#4f00b0"/><stop offset="0.885" stop-color="#4d00b2"/><stop offset="0.941" stop-color="#3200cd"/><stop offset="1" stop-color="#3100ce"/></linearGradient><linearGradient id="r99"><stop offset="0" stop-color="#2600d9"/><stop offset="0.125" stop-color="#3100ce"/><stop offset="0.227" stop-color="#5a00a5"/><stop offset="0.243" stop-color="#5600a9"/><stop offset="0.293" stop-color="#3100ce"/><stop offset="0.474" stop-color="#2b00d4"/><stop offset="0.526" stop-color="#2100de"/><stop offset="0.751" stop-color="#3100ce"/><stop offset="0.838" stop-color="#4f00b0"/><stop offset="0.882" stop-color="#4d00b2"/><stop offset="0.938" stop-color="#3200cd"/><stop offset="1" stop-color="#3100ce"/></linearGradient></defs><rect y="0.00" width="642" height="7.22" fill="url(#r0)"/><rect y="6.22" width="642" height="7.22" fill="url(#r1)"/><rect y="12.44" width="642" height="7.22" fill="url(#r2)"/><rect y="18.66" width="642" height="7.22" fill="url(#r3)"/><rect y="24.88" width="642" height="7.22" fill="url(#r4)"/><rect y="31.10" width="642" height="7.22" fill="url(#r5)"/><rect y="37.32" width="642" height="7.22" fill="url(#r6)"/><rect y="43.54" width="642" height="7.22" fill="url(#r7)"/><rect y="49.76" width="642" height="7.22" fill="url(#r8)"/><rect y="55.98" width="642" height="7.22" fill="url(#r9)"/><rect y="62.20" width="642" height="7.22" fill="url(#r10)"/><rect y="68.42" width="642" height="7.22" fill="url(#r11)"/><rect y="74.64" width="642" height="7.22" fill="url(#r12)"/><rect y="80.86" width="642" height="7.22" fill="url(#r13)"/><rect y="87.08" width="642" height="7.22" fill="url(#r14)"/><rect y="93.30" width="642" height="7.22" fill="url(#r15)"/><rect y="99.52" width="642" height="7.22" fill="url(#r16)"/><rect y="105.74" width="642" height="7.22" fill="url(#r17)"/><rect y="111.96" width="642" height="7.22" fill="url(#r18)"/><rect y="118.18" width="642" height="7.22" fill="url(#r19)"/><rect y="124.40" width="642" height="7.22" fill="url(#r20)"/><rect y="130.62" width="642" height="7.22" fill="url(#r21)"/><rect y="136.84" width="642" height="7.22" fill="url(#r22)"/><rect y="143.06" width="642" height="7.22" fill="url(#r23)"/><rect y="149.28" width="642" height="7.22" fill="url(#r24)"/><rect y="155.50" width="642" height="7.22" fill="url(#r25)"/><rect y="161.72" width="642" height="7.22" fill="url(#r26)"/><rect y="167.94" width="642" height="7.22" fill="url(#r27)"/><rect y="174.16" width="642" height="7.22" fill="url(#r28)"/><rect y="180.38" width="642" height="7.22" fill="url(#r29)"/><rect y="186.60" width="642" height="7.22" fill="url(#r30)"/><rect y="192.82" width="642" height="7.22" fill="url(#r31)"/><rect y="199.04" width="642" height="7.22" fill="url(#r32)"/><rect y="205.26" width="642" height="7.22" fill="url(#r33)"/><rect y="211.48" width="642" height="7.22" fill="url(#r34)"/><rect y="217.70" width="642" height="7.22" fill="url(#r35)"/><rect y="223.92" width="642" height="7.22" fill="url(#r36)"/><rect y="230.14" width="642" height="7.22" fill="url(#r37)"/><rect y="236.36" width="642" height="7.22" fill="url(#r38)"/><rect y="242.58" width="642" height="7.22" fill="url(#r39)"/><rect y="248.80" width="642" height="7.22" fill="url(#r40)"/><rect y="255.02" width="642" height="7.22" fill="url(#r41)"/><rect y="261.24" width="642" height="7.22" fill="url(#r42)"/><rect y="267.46" width="642" height="7.22" fill="url(#r43)"/><rect y="273.68" width="642" height="7.22" fill="url(#r44)"/><rect y="279.90" width="642" height="7.22" fill="url(#r45)"/><rect y="286.12" width="642" height="7.22" fill="url(#r46)"/><rect y="292.34" width="642" height="7.22" fill="url(#r47)"/><rect y="298.56" width="642" height="7.22" fill="url(#r48)"/><rect y="304.78" width="642" height="7.22" fill="url(#r49)"/><rect y="311.00" width="642" height="7.22" fill="url(#r50)"/><rect y="317.22" width="642" height="7.22" fill="url(#r51)"/><rect y="323.44" width="642" height="7.22" fill="url(#r52)"/><rect y="329.66" width="642" height="7.22" fill="url(#r53)"/><rect y="335.88" width="642" height="7.22" fill="url(#r54)"/><rect y="342.10" width="642" height="7.22" fill="url(#r55)"/><rect y="348.32" width="642" height="7.22" fill="url(#r56)"/><rect y="354.54" width="642" height="7.22" fill="url(#r57)"/><rect y="360.76" width="642" height="7.22" fill="url(#r58)"/><rect y="366.98" width="642" height="7.22" fill="url(#r59)"/><rect y="373.20" width="642" height="7.22" fill="url(#r60)"/><rect y="379.42" width="642" height="7.22" fill="url(#r61)"/><rect y="385.64" width="642" height="7.22" fill="url(#r62)"/><rect y="391.86" width="642" height="7.22" fill="url(#r63)"/><rect y="398.08" width="642" height="7.22" fill="url(#r64)"/><rect y="404.30" width="642" height="7.22" fill="url(#r65)"/><rect y="410.52" width="642" height="7.22" fill="url(#r66)"/><rect y="416.74" width="642" height="7.22" fill="url(#r67)"/><rect y="422.96" width="642" height="7.22" fill="url(#r68)"/><rect y="429.18" width="642" height="7.22" fill="url(#r69)"/><rect y="435.40" width="642" height="7.22" fill="url(#r70)"/><rect y="441.62" width="642" height="7.22" fill="url(#r71)"/><rect y="447.84" width="642" height="7.22" fill="url(#r72)"/><rect y="454.06" width="642" height="7.22" fill="url(#r73)"/><rect y="460.28" width="642" height="7.22" fill="url(#r74)"/><rect y="466.50" width="642" height="7.22" fill="url(#r75)"/><rect y="472.72" width="642" height="7.22" fill="url(#r76)"/><rect y="478.94" width="642" height="7.22" fill="url(#r77)"/><rect y="485.16" width="642" height="7.22" fill="url(#r78)"/><rect y="491.38" width="642" height="7.22" fill="url(#r79)"/><rect y="497.60" width="642" height="7.22" fill="url(#r80)"/><rect y="503.82" width="642" height="7.22" fill="url(#r81)"/><rect y="510.04" width="642" height="7.22" fill="url(#r82)"/><rect y="516.26" width="642" height="7.22" fill="url(#r83)"/><rect y="522.48" width="642" height="7.22" fill="url(#r84)"/><rect y="528.70" width="642" height="7.22" fill="url(#r85)"/><rect y="534.92" width="642" height="7.22" fill="url(#r86)"/><rect y="541.14" width="642" height="7.22" fill="url(#r87)"/><rect y="547.36" width="642" height="7.22" fill="url(#r88)"/><rect y="553.58" width="642" height="7.22" fill="url(#r89)"/><rect y="559.80" width="642" height="7.22" fill="url(#r90)"/><rect y="566.02" width="642" height="7.22" fill="url(#r91)"/><rect y="572.24" width="642" height="7.22" fill="url(#r92)"/><rect y="578.46" width="642" height="7.22" fill="url(#r93)"/><rect y="584.68" width="642" height="7.22" fill="url(#r94)"/><rect y="590.90" width="642" height="7.22" fill="url(#r95)"/><rect y="597.12" width="642" height="7.22" fill="url(#r96)"/><rect y="603.34" width="642" height="7.22" fill="url(#r97)"/><rect y="609.56" width="642" height="7.22" fill="url(#r98)"/><rect y="615.78" width="642" height="6.22" fill="url(#r99)"/></g>
<line x1="105" y1="712" x2="748.5" y2="712" stroke="#000" stroke-width="1.6"/>
<line x1="119.1" y1="712" x2="119.1" y2="719" stroke="#000" stroke-width="1.3"/><line x1="133.3" y1="712" x2="133.3" y2="719" stroke="#000" stroke-width="1.3"/><line x1="147.6" y1="712" x2="147.6" y2="719" stroke="#000" stroke-width="1.3"/><line x1="161.9" y1="712" x2="161.9" y2="726.5" stroke="#000" stroke-width="1.3"/><line x1="176.2" y1="712" x2="176.2" y2="719" stroke="#000" stroke-width="1.3"/><line x1="190.5" y1="712" x2="190.5" y2="719" stroke="#000" stroke-width="1.3"/><line x1="204.7" y1="712" x2="204.7" y2="719" stroke="#000" stroke-width="1.3"/><line x1="219.0" y1="712" x2="219.0" y2="719" stroke="#000" stroke-width="1.3"/><line x1="233.3" y1="712" x2="233.3" y2="731" stroke="#f00" stroke-width="1.3"/><line x1="247.6" y1="712" x2="247.6" y2="719" stroke="#000" stroke-width="1.3"/><line x1="261.9" y1="712" x2="261.9" y2="719" stroke="#000" stroke-width="1.3"/><line x1="276.1" y1="712" x2="276.1" y2="719" stroke="#000" stroke-width="1.3"/><line x1="290.4" y1="712" x2="290.4" y2="719" stroke="#000" stroke-width="1.3"/><line x1="304.7" y1="712" x2="304.7" y2="726.5" stroke="#000" stroke-width="1.3"/><line x1="319.0" y1="712" x2="319.0" y2="719" stroke="#000" stroke-width="1.3"/><line x1="333.3" y1="712" x2="333.3" y2="719" stroke="#000" stroke-width="1.3"/><line x1="347.5" y1="712" x2="347.5" y2="719" stroke="#000" stroke-width="1.3"/><line x1="361.8" y1="712" x2="361.8" y2="719" stroke="#000" stroke-width="1.3"/><line x1="376.1" y1="712" x2="376.1" y2="731" stroke="#f00" stroke-width="1.3"/><line x1="390.4" y1="712" x2="390.4" y2="719" stroke="#000" stroke-width="1.3"/><line x1="404.7" y1="712" x2="404.7" y2="719" stroke="#000" stroke-width="1.3"/><line x1="418.9" y1="712" x2="418.9" y2="719" stroke="#000" stroke-width="1.3"/><line x1="433.2" y1="712" x2="433.2" y2="719" stroke="#000" stroke-width="1.3"/><line x1="447.5" y1="712" x2="447.5" y2="726.5" stroke="#000" stroke-width="1.3"/><line x1="461.8" y1="712" x2="461.8" y2="719" stroke="#000" stroke-width="1.3"/><line x1="476.1" y1="712" x2="476.1" y2="719" stroke="#000" stroke-width="1.3"/><line x1="490.3" y1="712" x2="490.3" y2="719" stroke="#000" stroke-width="1.3"/><line x1="504.6" y1="712" x2="504.6" y2="719" stroke="#000" stroke-width="1.3"/><line x1="518.9" y1="712" x2="518.9" y2="731" stroke="#f00" stroke-width="1.3"/><line x1="533.2" y1="712" x2="533.2" y2="719" stroke="#000" stroke-width="1.3"/><line x1="547.5" y1="712" x2="547.5" y2="719" stroke="#000" stroke-width="1.3"/><line x1="561.7" y1="712" x2="561.7" y2="719" stroke="#000" stroke-width="1.3"/><line x1="576.0" y1="712" x2="576.0" y2="719" stroke="#000" stroke-width="1.3"/><line x1="590.3" y1="712" x2="590.3" y2="726.5" stroke="#000" stroke-width="1.3"/><line x1="604.6" y1="712" x2="604.6" y2="719" stroke="#000" stroke-width="1.3"/><line x1="618.9" y1="712" x2="618.9" y2="719" stroke="#000" stroke-width="1.3"/><line x1="633.1" y1="712" x2="633.1" y2="719" stroke="#000" stroke-width="1.3"/><line x1="647.4" y1="712" x2="647.4" y2="719" stroke="#000" stroke-width="1.3"/><line x1="661.7" y1="712" x2="661.7" y2="731" stroke="#f00" stroke-width="1.3"/><line x1="676.0" y1="712" x2="676.0" y2="719" stroke="#000" stroke-width="1.3"/><line x1="690.3" y1="712" x2="690.3" y2="719" stroke="#000" stroke-width="1.3"/><line x1="704.5" y1="712" x2="704.5" y2="719" stroke="#000" stroke-width="1.3"/><line x1="718.8" y1="712" x2="718.8" y2="719" stroke="#000" stroke-width="1.3"/><line x1="733.1" y1="712" x2="733.1" y2="726.5" stroke="#000" stroke-width="1.3"/><line x1="747.4" y1="712" x2="747.4" y2="719" stroke="#000" stroke-width="1.3"/>
<text x="89.2" y="158.4" text-anchor="end" font-size="18.3" fill="#000">10y</text><line x1="93" y1="152.0" x2="106" y2="152.0" stroke="#000" stroke-width="1.3"/><text x="89.2" y="187.9" text-anchor="end" font-size="18.3" fill="#000">8y</text><line x1="93" y1="181.5" x2="106" y2="181.5" stroke="#000" stroke-width="1.3"/><text x="89.2" y="208.4" text-anchor="end" font-size="18.3" fill="#000">7y</text><line x1="93" y1="202.0" x2="106" y2="202.0" stroke="#000" stroke-width="1.3"/><text x="89.2" y="228.4" text-anchor="end" font-size="18.3" fill="#000">6y</text><line x1="93" y1="222.0" x2="106" y2="222.0" stroke="#000" stroke-width="1.3"/><text x="89.2" y="249.0" text-anchor="end" font-size="18.3" fill="#000">5y</text><line x1="93" y1="242.6" x2="106" y2="242.6" stroke="#000" stroke-width="1.3"/><text x="89.2" y="280.4" text-anchor="end" font-size="18.3" fill="#000">4y</text><line x1="93" y1="274.0" x2="106" y2="274.0" stroke="#000" stroke-width="1.3"/><text x="89.2" y="330.4" text-anchor="end" font-size="18.3" fill="#000">3y</text><line x1="93" y1="324.0" x2="106" y2="324.0" stroke="#000" stroke-width="1.3"/><text x="89.2" y="380.4" text-anchor="end" font-size="18.3" fill="#000">2y</text><line x1="93" y1="374.0" x2="106" y2="374.0" stroke="#000" stroke-width="1.3"/><text x="89.2" y="484.0" text-anchor="end" font-size="18.3" fill="#000">1y</text><line x1="93" y1="477.6" x2="106" y2="477.6" stroke="#000" stroke-width="1.3"/><text x="89.2" y="565.4" text-anchor="end" font-size="18.3" fill="#000">200d</text><line x1="93" y1="559.0" x2="106" y2="559.0" stroke="#000" stroke-width="1.3"/><text x="89.2" y="667.0" text-anchor="end" font-size="18.3" fill="#000">100d</text><line x1="93" y1="660.6" x2="106" y2="660.6" stroke="#000" stroke-width="1.3"/>
<line x1="102.5" y1="161" x2="106" y2="161" stroke="#000" stroke-width="1.3"/>
<text transform="translate(247.5,751.5) rotate(-55)" text-anchor="end" font-size="25.5" fill="#505050">1980</text><text transform="translate(390.0,751.5) rotate(-55)" text-anchor="end" font-size="25.5" fill="#505050">1990</text><text transform="translate(530.7,756.0) rotate(-56)" text-anchor="end" font-size="24.5" font-weight="bold" font-style="italic" fill="#8b0000">2000</text><text transform="translate(674.9,753.0) rotate(-55)" text-anchor="end" font-size="25.5" fill="#505050">2010</text>
<path d="M793.8 91.4C787.7 94.6 766.1 103.1 760.6 108.6C755.1 114.1 763.2 118.0 764.0 121.2C764.8 124.4 767.7 122.6 765.2 125.8C762.7 129.0 749.1 134.2 750.3 138.4C751.5 142.6 766.6 145.5 772.0 148.7C777.4 151.9 780.6 152.4 780.0 155.6C779.4 158.8 768.0 163.1 768.6 165.9C769.2 168.7 774.5 169.1 783.5 171.1C792.5 173.1 801.9 173.6 817.9 176.6C833.9 179.6 863.8 184.1 870.5 187.6C877.2 191.1 860.2 192.9 854.5 195.6C848.8 198.3 837.7 199.3 839.6 202.5C841.5 205.7 869.6 208.6 864.8 212.8C860.0 217.0 815.3 221.1 813.3 225.4C811.3 229.7 857.6 232.4 853.8 236.4C850.0 240.4 795.5 243.6 792.7 247.2C789.9 250.8 841.5 252.9 838.5 256.3C835.5 259.7 779.1 262.1 776.6 265.9C774.1 269.7 821.2 272.4 824.7 276.9C828.2 281.4 793.1 286.0 795.6 290.3C798.1 294.6 829.2 297.0 838.5 300.6C847.8 304.2 846.5 307.3 846.5 309.8C846.5 312.3 849.6 312.2 838.5 314.3C827.4 316.4 792.5 319.1 785.8 321.2C779.1 323.3 803.9 323.5 801.8 325.8C799.7 328.1 778.9 331.5 774.3 333.8C769.7 336.1 779.7 336.5 776.6 338.4C773.5 340.3 761.6 341.8 757.2 344.1C752.8 346.4 748.6 348.3 752.6 351.0C756.6 353.7 775.0 356.3 778.9 359.0C782.8 361.7 769.4 363.2 773.9 365.9C778.4 368.6 802.6 370.3 803.7 373.9C804.8 377.5 783.0 381.9 780.1 385.3C777.2 388.7 786.4 389.7 788.1 392.2C789.8 394.7 785.5 395.9 789.2 399.1C792.9 402.3 810.9 405.8 808.2 409.4C805.5 413.0 785.1 415.1 774.3 418.5C763.5 421.9 747.5 424.1 749.2 427.7C750.9 431.3 780.5 434.4 783.5 438.0C786.5 441.6 762.2 443.6 765.6 447.2C769.0 450.8 801.1 453.7 802.3 457.5C803.5 461.3 774.5 464.7 772.1 467.8C769.7 470.9 787.7 471.9 789.2 474.6C790.7 477.3 780.2 479.8 780.1 482.7C780.0 485.6 792.4 487.4 788.4 490.5C784.4 493.6 762.4 496.7 758.3 499.6C754.2 502.5 765.2 504.3 766.2 506.2C767.2 508.1 762.4 507.7 763.6 510.1C764.8 512.5 775.2 515.7 772.7 519.3C770.2 522.9 749.3 526.1 750.0 529.7C750.7 533.3 773.2 536.3 776.6 538.9C780.0 541.5 768.3 541.7 768.8 544.1C769.3 546.5 781.3 548.6 779.3 552.0C777.3 555.4 760.7 558.9 757.8 562.5C754.9 566.1 758.0 568.5 763.6 571.6C769.2 574.7 791.0 575.3 788.4 579.5C785.8 583.7 750.4 590.5 749.2 594.7C748.0 598.9 780.0 599.7 781.9 602.5C783.8 605.3 761.3 607.6 759.6 610.1C757.9 612.6 772.9 613.8 772.7 616.1C772.5 618.4 760.0 620.1 758.3 622.7C756.6 625.3 763.8 627.6 763.6 630.5C763.4 633.4 756.8 635.5 757.0 638.4C757.2 641.3 765.0 643.3 764.9 646.2C764.8 649.1 757.8 651.2 756.5 654.1C755.2 657.0 758.7 659.3 757.8 661.9C756.9 664.5 751.5 665.4 751.8 668.5C752.1 671.6 758.2 675.6 759.6 679.0C761.0 682.4 761.3 683.9 759.6 686.8C757.9 689.7 750.2 692.1 750.5 694.7C750.8 697.3 762.0 698.3 761.5 701.2C761.0 704.1 750.4 708.7 747.9 710.4" fill="none" stroke="#000" stroke-width="1.3" stroke-linejoin="round"/>
<line x1="12" y1="189.7" x2="881" y2="189.7" stroke="#000" stroke-width="1.2"/>
<rect x="10.5" y="188.5" width="3" height="2.4" fill="#000"/>
<path d="M106 171.6H875V201H106ZM110 176V196.9H871V176Z" fill="#e74c3c" fill-rule="evenodd"/>
</svg>

<!-- status bar -->
<div class="a" style="left:10px;top:875px;width:871px;height:36px;background:#f0f0f0;border-top:1.3px solid #d4d4d4;box-sizing:border-box"></div>
<div class="t" style="left:12.5px;top:885.2px;font-size:18.8px;transform:scaleX(0.945);transform-origin:0 0;color:#111">11.25 y</div>
<div class="t" style="left:89px;top:885.2px;font-size:18.8px;transform:scaleX(0.895);transform-origin:0 0;color:#111">13.08.1971</div>
<div class="t" style="left:182.5px;top:885.2px;font-size:18.8px;transform:scaleX(0.96);transform-origin:0 0;color:#111">11:09</div>

<!-- splitter -->
<div class="a" style="left:880.9px;top:0;width:3.8px;height:912px;background:#a0a0a0"></div>

<!-- right panel -->
<div class="a" style="left:887px;top:3px;width:258.5px;height:909px;background:#f0f0f0"></div>
<div class="a" style="left:1143.3px;top:3px;width:2.3px;height:77px;background:#a0a0a0"></div>
<div class="a" style="left:1143.6px;top:80px;width:1.6px;height:832px;background:#c8c8c8"></div>
<div class="a" style="left:887px;top:78.4px;width:258.6px;height:1.8px;background:#a0a0a0"></div>
<div class="a" style="left:887px;top:80.2px;width:257px;height:1.3px;background:#fff"></div>

<div class="btn" style="left:899px;top:8px;width:237.5px;height:64px"></div>
<svg class="a" style="left:965.3px;top:25.3px" width="30" height="30" viewBox="-15 -15 30 30"><path d="M9.1 0.9 L13.2 0.9M6.7 6.7 L9.6 9.6M0.9 9.1 L0.9 13.2M-4.9 6.7 L-7.8 9.6M-7.3 0.9 L-11.4 0.9M-4.9 -4.9 L-7.8 -7.8M0.9 -7.3 L0.9 -11.4M6.7 -4.9 L9.6 -7.8" stroke="#222" stroke-width="1.1" fill="none"/><path d="M8.2 0.0 L12.3 0.0M5.8 5.8 L8.7 8.7M0.0 8.2 L0.0 12.3M-5.8 5.8 L-8.7 8.7M-8.2 0.0 L-12.3 0.0M-5.8 -5.8 L-8.7 -8.7M-0.0 -8.2 L-0.0 -12.3M5.8 -5.8 L8.7 -8.7" stroke="#ff0" stroke-width="1.5" fill="none"/><circle cx="0.7" cy="0.7" r="5.8" fill="#222"/><circle r="5.9" fill="#ff0"/></svg>
<div class="t" style="left:1000.5px;top:30.2px;font-size:18.4px;transform:scaleX(0.89);transform-origin:0 0">Calculate</div>

<!-- group 1 -->
<div class="grp" style="left:888px;top:91.5px;width:256px;height:150.5px"></div>
<div class="t" style="left:897px;top:81.5px;font-size:16px;letter-spacing:0.3px;background:#f0f0f0;padding:0 2px">Period Frame/Algorithm</div>
<div class="t" style="left:916.5px;top:115px;font-size:15.4px">Min=</div>
<div class="inp" style="left:956px;top:109px;width:59px;height:35.5px"></div>
<div class="t" style="left:961.5px;top:115px;font-size:16px">10</div>
<div class="sp" style="left:988.7px;top:114px;width:20.2px;height:11px"></div>
<div class="sp" style="left:988.7px;top:126.6px;width:20.2px;height:11.2px"></div>
<svg class="a" style="left:988.7px;top:114px" width="21" height="24" viewBox="0 0 21 24"><path d="M4.6 8.6L10.1 3L15.6 8.6ZM4.6 15.6L10.1 21.2L15.6 15.6Z" fill="#000"/></svg>
<div class="t" style="left:1020.7px;top:115px;font-size:16px;letter-spacing:0.85px">bars</div>

<div class="t" style="left:914px;top:158.5px;font-size:15.4px">Max=</div>
<div class="inp" style="left:956px;top:151.5px;width:88.5px;height:35.2px"></div>
<div class="t" style="left:961.5px;top:157.5px;font-size:16px">15</div>
<div class="sp" style="left:1018.8px;top:156.7px;width:20.2px;height:11px"></div>
<div class="sp" style="left:1018.8px;top:169.2px;width:20.2px;height:11.2px"></div>
<svg class="a" style="left:1018.8px;top:156.7px" width="21" height="24" viewBox="0 0 21 24"><path d="M4.6 8.6L10.1 3L15.6 8.6ZM4.6 15.6L10.1 21.2L15.6 15.6Z" fill="#000"/></svg>
<div class="btn" style="left:1048.8px;top:151.5px;width:71.7px;height:34.3px"></div>
<div class="t" style="left:1055px;top:157.5px;font-size:16.5px">y</div>
<svg class="a" style="left:1099px;top:164px" width="16" height="12" viewBox="0 0 16 12"><path d="M1.5 2.5L7.7 8.7L14 2.5" fill="none" stroke="#505050" stroke-width="1.25"/></svg>
<div class="btn" style="left:902.3px;top:195.7px;width:227.5px;height:33.3px"></div>
<div class="t" style="left:908.5px;top:202.5px;font-size:16.2px">Smoothed</div>
<svg class="a" style="left:1108px;top:207.5px" width="16" height="12" viewBox="0 0 16 12"><path d="M1.5 2.5L7.7 8.7L14 2.5" fill="none" stroke="#505050" stroke-width="1.25"/></svg>

<!-- group 2 -->
<div class="grp" style="left:888px;top:255px;width:256px;height:232.5px"></div>
<div class="t" style="left:897px;top:245px;font-size:16px;letter-spacing:1.4px;background:#f0f0f0;padding:0 2px">View</div>
<div class="t" style="left:910.7px;top:274px;font-size:15.3px;letter-spacing:0.35px">Quality</div>
<div class="inp" style="left:963.5px;top:267.6px;width:65.6px;height:35.8px"></div>
<div class="t" style="left:969.2px;top:274px;font-size:16px">100</div>
<div class="sp" style="left:1003.2px;top:272.7px;width:20.2px;height:11.3px"></div>
<div class="sp" style="left:1003.2px;top:286px;width:20.2px;height:11.3px"></div>
<svg class="a" style="left:1003.2px;top:272.7px" width="21" height="25" viewBox="0 0 21 25"><path d="M4.6 8.8L10.1 3.2L15.6 8.8ZM4.6 16.2L10.1 21.8L15.6 16.2Z" fill="#000"/></svg>
<div class="btn" style="left:1033.3px;top:268.2px;width:107.7px;height:33.5px"></div>
<div class="t" style="left:1039px;top:274.5px;font-size:16.2px;letter-spacing:0.4px;width:71px;overflow:hidden">Amplitude</div>
<svg class="a" style="left:1119.5px;top:280px" width="16" height="12" viewBox="0 0 16 12"><path d="M1.5 2.5L7.7 8.7L14 2.5" fill="none" stroke="#505050" stroke-width="1.25"/></svg>
<div class="btn" style="left:905.3px;top:310.4px;width:232.5px;height:34px"></div>
<div class="t" style="left:911.5px;top:317px;font-size:16.2px;letter-spacing:0.6px">blue-red-yellow</div>
<svg class="a" style="left:1116px;top:322.5px" width="16" height="12" viewBox="0 0 16 12"><path d="M1.5 2.5L7.7 8.7L14 2.5" fill="none" stroke="#505050" stroke-width="1.25"/></svg>

<div class="cb" style="left:894px;top:353px"></div>
<svg class="a" style="left:894px;top:353px" width="20" height="20" viewBox="0 0 20 20"><path d="M3.8 10.2L8 14.3L16.3 5.2" fill="none" stroke="#555" stroke-width="1.5"/></svg>
<div class="t" style="left:919.5px;top:354.5px;font-size:16px;letter-spacing:0.95px">Show Cycles</div>
<div class="cb" style="left:894px;top:384.3px"></div>
<div class="t" style="left:919.5px;top:385.5px;font-size:16px;letter-spacing:0.15px">Maxima Skeleton</div>
<div class="cb" style="left:894px;top:420.5px"></div>
<div class="t" style="left:919.5px;top:420.5px;font-size:16px;letter-spacing:0.35px">Price Chart</div>
<div class="btn" style="left:908.6px;top:447.2px;width:223.2px;height:33.8px"></div>
<div class="t" style="left:908.6px;top:454.7px;width:223.2px;text-align:center;font-size:16.4px;letter-spacing:0.35px">Hide spectrum</div>

<!-- group 3 -->
<div class="grp" style="left:888px;top:501px;width:256px;height:48px"></div>
<div class="t" style="left:897px;top:491px;font-size:16px;background:#f0f0f0;padding:0 2px">Filter</div>
<div class="a" style="left:902px;top:515.3px;width:169.7px;height:8.2px;background:#e7eaea;border:1px solid #d6d6d6;box-sizing:border-box"></div>
<svg class="a" style="left:999px;top:514.5px" width="9" height="13" viewBox="0 0 9 13"><path d="M0.5 0.3H8.5V8.5L4.5 12.3L0.5 8.5Z" fill="#0078d7"/></svg>
<div class="a" style="left:905.5px;top:531px;width:1px;height:5.7px;background:#c4c4c4"></div>
<div class="a" style="left:1067.5px;top:531px;width:1px;height:5.7px;background:#c4c4c4"></div>
<div class="btn" style="left:1088px;top:508.6px;width:43.8px;height:32px"></div>
<div class="t" style="left:1088px;top:515.5px;width:43.8px;text-align:center;font-size:16.4px">OK</div>

<!-- group 4 -->
<div class="grp" style="left:888px;top:560.5px;width:256px;height:351px;border-bottom:none"></div>
<div class="t" style="left:897px;top:551px;font-size:16px;letter-spacing:0.3px;background:#f0f0f0;padding:0 2px">Cycle Box</div>
<div class="a" style="left:889.4px;top:574.3px;width:252px;height:1.2px;background:#fff"></div>
<div class="a" style="left:1140.6px;top:574.3px;width:1.2px;height:40px;background:#fff"></div>
<div class="btn" style="left:892.9px;top:578px;width:38.6px;height:33.6px"></div>
<div class="a" style="left:904.8px;top:591px;width:16.5px;height:5.6px;border:1.6px solid #000;background:#f4f4f4;box-sizing:border-box"></div>
<div class="btn" style="left:935.5px;top:578px;width:37.2px;height:33.6px"></div>
<svg class="a" style="left:935.5px;top:578px" width="37" height="34" viewBox="935.5 578 37 34"><text x="939.5" y="607.3" font-family="Liberation Sans, sans-serif" font-size="22" font-weight="bold" font-style="italic" fill="#000">a</text><g transform="translate(951.9,598.6) rotate(-46.5)"><rect x="0" y="-2.6" width="9" height="5.2" fill="#f00"/><rect x="9" y="-2.6" width="11" height="5.2" fill="#f4f000"/><path d="M20 -2.6L22 0L20 2.6Z" fill="#f4f000"/><line x1="2" y1="-2.8" x2="21" y2="-2.8" stroke="#000" stroke-width="1"/></g><g fill="#000"><rect x="946" y="585" width="1.6" height="1.6"/><rect x="948" y="588.5" width="1.4" height="1.4"/><rect x="949.5" y="591.5" width="1.3" height="1.3"/><rect x="955.5" y="603" width="1.4" height="1.4"/><rect x="958.5" y="604.5" width="1.4" height="1.4"/></g></svg>
<div class="btn" style="left:979.3px;top:578px;width:51.8px;height:33.6px"></div>
<div class="t" style="left:979.3px;top:583px;width:51.8px;text-align:center;font-size:18.6px;color:#f0f">wave</div>
<div class="t" style="left:1047px;top:586px;font-size:16.2px">ov</div>
<div class="inp" style="left:1070.6px;top:576.3px;width:62.3px;height:36.8px"></div>
<div class="t" style="left:1075.6px;top:582.5px;font-size:17.5px">4</div>
<div class="sp" style="left:1106.9px;top:581px;width:20.2px;height:11.3px"></div>
<div class="sp" style="left:1106.9px;top:594px;width:20.2px;height:12.5px"></div>
<svg class="a" style="left:1106.9px;top:581px" width="21" height="26" viewBox="0 0 21 26"><path d="M4.6 8.8L10.1 3.2L15.6 8.8ZM4.6 16.6L10.1 22.2L15.6 16.6Z" fill="#000"/></svg>

<!-- list -->
<div class="a" style="left:889.4px;top:614px;width:252px;height:295.2px;background:#fff;border:1.5px solid #828790;border-top:2.5px solid #8a8a8a;box-sizing:border-box"></div>
<div class="a" style="left:896px;top:621px;width:16.6px;height:16px;background:#fff;border:1.4px solid #444;box-sizing:border-box"></div>
<svg class="a" style="left:896px;top:621px" width="17" height="16" viewBox="0 0 17 16"><path d="M3 8.2L6.6 11.6L13.8 3.8" fill="none" stroke="#666" stroke-width="1.5"/></svg>
<div class="t" style="left:919px;top:619.5px;font-size:15.8px;letter-spacing:0.05px">7.48896</div><div class="t" style="left:979px;top:619.5px;font-size:16.5px">Y</div><div class="t" style="left:997.5px;top:619.5px;font-size:16.2px;letter-spacing:0.3px;word-spacing:0.5px">(FIT : 40.4)</div>
</body></html>
